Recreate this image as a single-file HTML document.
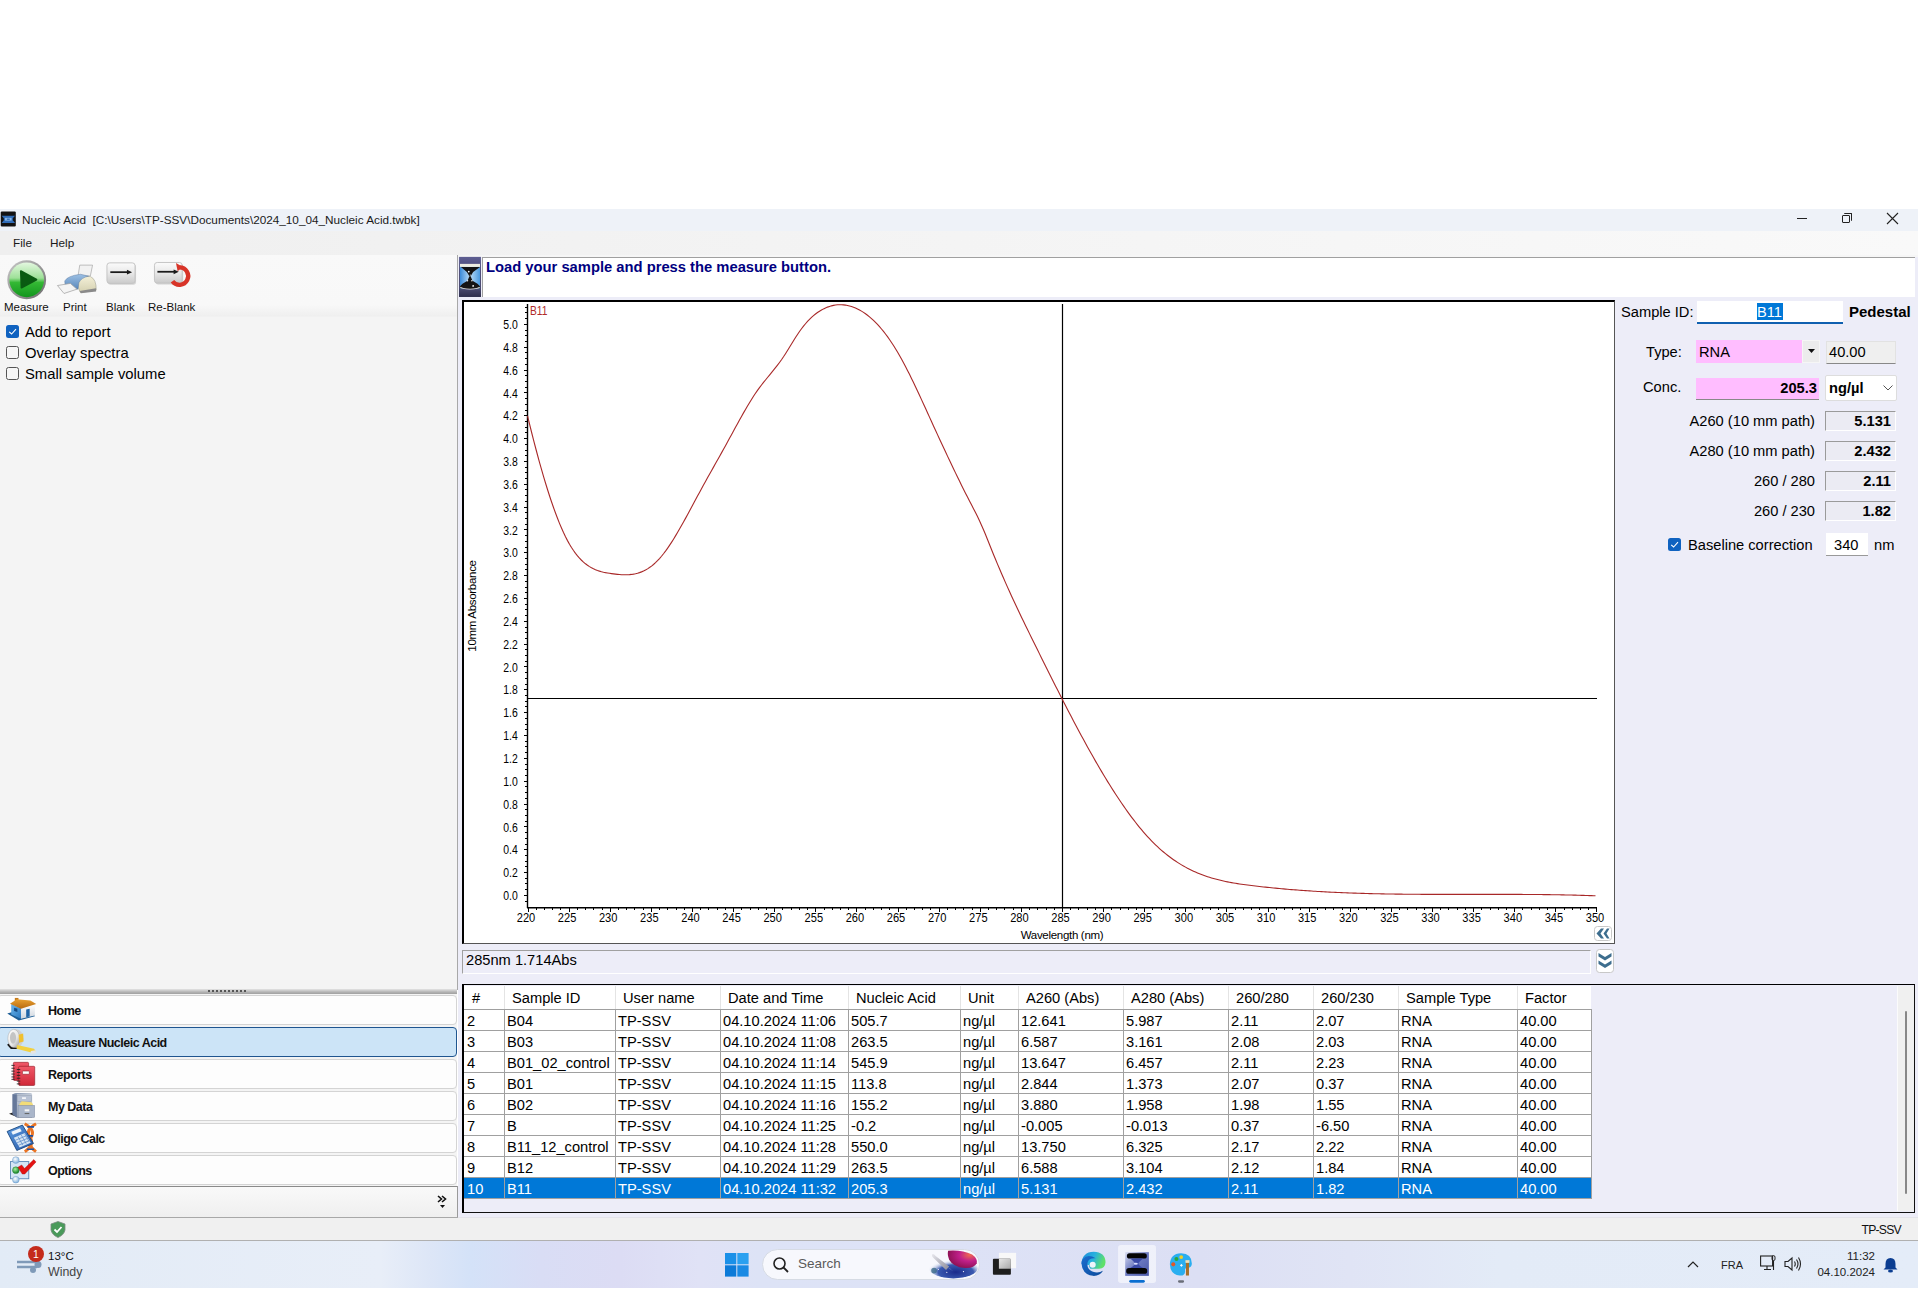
<!DOCTYPE html>
<html><head><meta charset="utf-8">
<style>
*{margin:0;padding:0;box-sizing:border-box}
html,body{width:1920px;height:1312px;overflow:hidden;background:#fff;font-family:"Liberation Sans", sans-serif;color:#000}
.a{position:absolute}
.t{position:absolute;white-space:nowrap;line-height:1}
svg text{font-family:"Liberation Sans", sans-serif}
.ax{font-size:12.6px;fill:#000}
.ax2{font-size:11.5px;letter-spacing:-0.3px;fill:#000}
</style></head><body>

<div class="a" style="left:0;top:209px;width:1918px;height:22px;background:#eef2f8"></div>
<div class="a" style="left:0;top:231px;width:1918px;height:24px;background:linear-gradient(90deg,#efefef,#f3f3f3 40%,#f9f9f9)"></div>
<div class="t" style="left:22px;top:214px;font-size:11.75px;color:#1a1a1a">Nucleic Acid&nbsp; [C:\Users\TP-SSV\Documents\2024_10_04_Nucleic Acid.twbk]</div>
<div class="t" style="left:13px;top:237px;font-size:11.75px;color:#1a1a1a">File</div>
<div class="t" style="left:50px;top:237px;font-size:11.75px;color:#1a1a1a">Help</div>
<svg class="a" style="left:0;top:200px" width="20" height="40" viewBox="0 0 219 437">
<rect x="8" y="125" width="165" height="165" rx="12" fill="#121212"/>
<path d="M18,172 L165,172 L140,200 L140,222 L165,250 L18,250 L42,222 L42,200 Z" fill="#2f6cb8"/>
<rect x="55" y="195" width="72" height="30" fill="#8ab8e8"/>
<rect x="75" y="203" width="32" height="14" fill="#2f6cb8"/>
</svg>
<div class="a" style="left:1797px;top:218px;width:10px;height:1px;background:#222"></div>
<div class="a" style="left:1842px;top:215px;width:8px;height:8px;border:1px solid #222;border-radius:1px"></div>
<div class="a" style="left:1844px;top:213px;width:8px;height:8px;border-top:1px solid #222;border-right:1px solid #222;border-radius:1px"></div>
<svg class="a" style="left:1886px;top:212px" width="13" height="13"><path d="M1,1 L12,12 M12,1 L1,12" stroke="#222" stroke-width="1.1"/></svg>
<div class="a" style="left:0;top:255px;width:457px;height:962px;background:#f4f4f4"></div>
<div class="a" style="left:0;top:255px;width:457px;height:62px;background:linear-gradient(#f9f9f9 0px,#f8f8f8 50px,#efefef 61px,#f3f3f3 62px)"></div>
<div class="a" style="left:457px;top:255px;width:1px;height:735px;background:#a8a8a8"></div>
<svg class="a" style="left:0;top:200px" width="120" height="120" viewBox="0 0 1312 1312">
<defs>
<linearGradient id="mr" x1="0" y1="0" x2="1" y2="1"><stop offset="0" stop-color="#c8c8c8"/><stop offset="1" stop-color="#6a6a6a"/></linearGradient>
<linearGradient id="mg" x1="0" y1="0" x2="0" y2="1"><stop offset="0" stop-color="#e4f8e0"/><stop offset="0.45" stop-color="#9ee098"/><stop offset="0.58" stop-color="#34b834"/><stop offset="1" stop-color="#12961e"/></linearGradient>
<linearGradient id="pb" x1="0" y1="0" x2="0" y2="1"><stop offset="0" stop-color="#9cc0e4"/><stop offset="1" stop-color="#5a88bc"/></linearGradient>
<linearGradient id="pc" x1="0" y1="0" x2="0" y2="1"><stop offset="0" stop-color="#f4f0d8"/><stop offset="1" stop-color="#d4d0b0"/></linearGradient>
</defs>
<circle cx="292" cy="872" r="212" fill="url(#mr)"/>
<circle cx="292" cy="872" r="190" fill="url(#mg)"/>
<path d="M228,778 L398,870 L235,958 Z" fill="#0a5a12" stroke="#0a5a12" stroke-width="20" stroke-linejoin="round"/>
<path d="M872,712 L1012,712 L988,830 L852,838 Z" fill="#f2f2f2" stroke="#a8a8a8" stroke-width="8"/>
<path d="M840,830 L990,838 Q1055,868 1052,985 L880,1012 Q845,960 840,830 Z" fill="url(#pc)" stroke="#9a9a8a" stroke-width="6"/>
<path d="M708,885 Q740,828 880,812 L968,832 Q885,852 862,905 L852,975 Q760,962 712,935 Z" fill="url(#pb)" stroke="#5a7aa0" stroke-width="5"/>
<path d="M628,935 L770,912 L842,975 L700,1022 Z" fill="#f4f4f4" stroke="#a0a0a0" stroke-width="8"/>
<path d="M870,995 L1050,965 L1050,1000 L885,1020 Z" fill="#8a8a8a"/>
</svg>
<svg class="a" style="left:100px;top:250px" width="380" height="150" viewBox="0 0 1920 758">
<defs><linearGradient id="bk" x1="0" y1="0" x2="0" y2="1"><stop offset="0" stop-color="#fbfbfb"/><stop offset="0.5" stop-color="#e8e8e8"/><stop offset="1" stop-color="#cacaca"/></linearGradient></defs>
<rect x="40" y="72" width="142" height="104" rx="14" fill="#bdbdbd" opacity="0.6"/>
<rect x="35" y="65" width="142" height="104" rx="14" fill="url(#bk)" stroke="#c4c4c4" stroke-width="5"/>
<path d="M52,112 L142,112" stroke="#1a1a1a" stroke-width="9"/><path d="M136,100 L162,112 L136,124 Z" fill="#1a1a1a"/>
<rect x="280" y="70" width="140" height="104" rx="14" fill="#bdbdbd" opacity="0.6"/>
<rect x="275" y="63" width="140" height="104" rx="14" fill="url(#bk)" stroke="#c4c4c4" stroke-width="5"/>
<path d="M290,110 L378,110" stroke="#1a1a1a" stroke-width="9"/><path d="M372,98 L398,110 L372,122 Z" fill="#1a1a1a"/>
<path d="M402,88 A44,44 0 1 1 366,158" fill="none" stroke="#d83428" stroke-width="22"/>
<path d="M384,66 L418,86 L392,108 Z" fill="#d83428"/>
</svg>
<div class="t" style="left:4px;top:302px;font-size:11.5px;color:#111">Measure</div>
<div class="t" style="left:63px;top:302px;font-size:11.5px;color:#111">Print</div>
<div class="t" style="left:106px;top:302px;font-size:11.5px;color:#111">Blank</div>
<div class="t" style="left:148px;top:302px;font-size:11.5px;color:#111">Re-Blank</div>
<div class="a" style="left:6px;top:325px;width:13px;height:13px;background:#0f62c0;border-radius:2.5px"></div>
<svg class="a" style="left:6px;top:325px" width="13" height="13"><path d="M3.2,6.8 L5.6,9 L10,4.2" fill="none" stroke="#fff" stroke-width="1.1"/></svg>
<div class="a" style="left:6px;top:346px;width:13px;height:13px;border:1px solid #555;border-radius:2.5px;background:#f6f6f6"></div>
<div class="a" style="left:6px;top:367px;width:13px;height:13px;border:1px solid #555;border-radius:2.5px;background:#f6f6f6"></div>
<div class="t" style="left:25px;top:325px;font-size:14.8px">Add to report</div>
<div class="t" style="left:25px;top:346px;font-size:14.8px">Overlay spectra</div>
<div class="t" style="left:25px;top:367px;font-size:14.8px">Small sample volume</div>
<div class="a" style="left:0;top:989px;width:457px;height:5px;background:linear-gradient(#e4e4e4,#b4b4b4 60%,#a0a0a0)"></div>
<div class="a" style="left:208px;top:990px;width:40px;height:2px;background:repeating-linear-gradient(90deg,#555 0 2px,transparent 2px 4px)"></div>
<div class="a" style="left:-3px;top:995px;width:460px;height:30px;background:#fdfdfd;border:1px solid #d4d4d4;border-radius:4px"></div>
<div class="t" style="left:48px;top:1005px;font-size:12.5px;font-weight:bold;letter-spacing:-0.5px;color:#111">Home</div>
<div class="a" style="left:-3px;top:1027px;width:460px;height:30px;background:#cce4f7;border:1px solid #1f5590;border-radius:4px"></div>
<div class="t" style="left:48px;top:1037px;font-size:12.5px;font-weight:bold;letter-spacing:-0.5px;color:#111">Measure Nucleic Acid</div>
<div class="a" style="left:-3px;top:1059px;width:460px;height:30px;background:#fdfdfd;border:1px solid #d4d4d4;border-radius:4px"></div>
<div class="t" style="left:48px;top:1069px;font-size:12.5px;font-weight:bold;letter-spacing:-0.5px;color:#111">Reports</div>
<div class="a" style="left:-3px;top:1091px;width:460px;height:30px;background:#fdfdfd;border:1px solid #d4d4d4;border-radius:4px"></div>
<div class="t" style="left:48px;top:1101px;font-size:12.5px;font-weight:bold;letter-spacing:-0.5px;color:#111">My Data</div>
<div class="a" style="left:-3px;top:1123px;width:460px;height:30px;background:#fdfdfd;border:1px solid #d4d4d4;border-radius:4px"></div>
<div class="t" style="left:48px;top:1133px;font-size:12.5px;font-weight:bold;letter-spacing:-0.5px;color:#111">Oligo Calc</div>
<div class="a" style="left:-3px;top:1155px;width:460px;height:30px;background:#fdfdfd;border:1px solid #d4d4d4;border-radius:4px"></div>
<div class="t" style="left:48px;top:1165px;font-size:12.5px;font-weight:bold;letter-spacing:-0.5px;color:#111">Options</div>
<svg class="a" style="left:0;top:995px" width="50" height="95" viewBox="0 0 691 1312">
<defs>
<linearGradient id="hw" x1="0" y1="0" x2="0" y2="1"><stop offset="0" stop-color="#ffffff"/><stop offset="1" stop-color="#cfd6de"/></linearGradient>
<linearGradient id="hl" x1="0" y1="0" x2="1" y2="1"><stop offset="0" stop-color="#6ab4ea"/><stop offset="1" stop-color="#2a78c0"/></linearGradient>
<linearGradient id="hr" x1="0" y1="0" x2="0" y2="1"><stop offset="0" stop-color="#e8a030"/><stop offset="1" stop-color="#b86a10"/></linearGradient>
<linearGradient id="tp" x1="0" y1="0" x2="1" y2="1"><stop offset="0" stop-color="#ffffff"/><stop offset="0.6" stop-color="#e6e6e6"/><stop offset="1" stop-color="#9a9a9a"/></linearGradient>
<linearGradient id="rb" x1="0" y1="0" x2="0" y2="1"><stop offset="0" stop-color="#f05868"/><stop offset="1" stop-color="#d02838"/></linearGradient>
</defs>
<path d="M100,255 L260,352 L482,292 L470,270 L290,322 L160,238 Z" fill="#1d5e96"/>
<path d="M155,125 L290,182 L290,327 L155,268 Z" fill="url(#hl)"/>
<path d="M290,182 L482,128 L482,282 L290,327 Z" fill="url(#hw)"/>
<path d="M362,200 L410,188 L410,296 L362,307 Z" fill="#1f64a6"/>
<path d="M195,175 L240,190 L240,235 L195,220 Z" fill="#174a80"/>
<rect x="205" y="40" width="50" height="50" fill="#c47a1c"/>
<path d="M138,120 L232,58 L420,75 L500,125 L290,188 Z" fill="url(#hr)"/>
<path d="M98,688 L150,745 L255,745 L262,700 L150,650 Z" fill="#161616"/>
<ellipse cx="225" cy="600" rx="98" ry="128" fill="#cfcfcf"/>
<ellipse cx="190" cy="600" rx="82" ry="126" fill="url(#tp)" stroke="#a0a0a0" stroke-width="6"/>
<ellipse cx="180" cy="592" rx="42" ry="80" fill="#c4c4c4"/>
<path d="M258,548 L320,530 L326,642 L264,658 Z" fill="#f0c030"/>
<path d="M238,690 L470,742 L494,778 L462,802 L228,742 Z" fill="#f2d040"/>
<path d="M425,772 L492,762 L498,800 L432,818 Z" fill="#e4e4e4"/>
<rect x="185" y="930" width="210" height="250" rx="14" fill="url(#rb)" stroke="#8a1420" stroke-width="8"/>
<rect x="258" y="985" width="222" height="265" rx="14" fill="url(#rb)" stroke="#8a1420" stroke-width="8"/>
<rect x="310" y="1050" width="95" height="45" rx="8" fill="#fff" stroke="#8a1420" stroke-width="8"/>
<path d="M158,972 h45 M158,1012 h45 M158,1052 h45 M158,1092 h45 M158,1132 h45 M158,1165 h45" stroke="#222" stroke-width="12"/>
<path d="M232,1030 h48 M232,1070 h48 M232,1110 h48 M232,1150 h48 M232,1190 h48 M232,1228 h48" stroke="#222" stroke-width="12"/>
</svg>
<svg class="a" style="left:0;top:1088px" width="50" height="98" viewBox="0 0 669 1312">
<defs>
<linearGradient id="cf" x1="0" y1="0" x2="0" y2="1"><stop offset="0" stop-color="#c4ccda"/><stop offset="1" stop-color="#98a4b8"/></linearGradient>
<linearGradient id="ca" x1="0" y1="0" x2="1" y2="1"><stop offset="0" stop-color="#5a9ae0"/><stop offset="1" stop-color="#2a5aa8"/></linearGradient>
<radialGradient id="gb" cx="40%" cy="35%" r="60%"><stop offset="0" stop-color="#a8f0a0"/><stop offset="1" stop-color="#1a8a2a"/></radialGradient>
<radialGradient id="bb" cx="40%" cy="35%" r="60%"><stop offset="0" stop-color="#ffffff"/><stop offset="1" stop-color="#8ab8e0"/></radialGradient>
</defs>
<path d="M120,345 L250,398 L250,372 L170,328 Z" fill="#222"/>
<path d="M165,82 L228,66 L228,398 L165,350 Z" fill="#66789a"/>
<path d="M165,82 L222,66 L420,72 L430,88 L228,92 Z" fill="#8a9ab4"/>
<rect x="226" y="90" width="204" height="308" fill="url(#cf)"/>
<rect x="232" y="98" width="188" height="80" fill="#b8c2d4" stroke="#8a96aa" stroke-width="5"/>
<rect x="295" y="125" width="52" height="20" fill="#fff"/>
<path d="M258,218 L290,178 L420,190 L442,216 L432,242 L258,246 Z" fill="#f2dc78"/>
<rect x="242" y="232" width="222" height="162" fill="#aab6ca" stroke="#7a869c" stroke-width="6"/>
<rect x="330" y="285" width="62" height="28" fill="#f4f4f4"/>
<rect x="330" y="335" width="62" height="14" fill="#666"/>
<path d="M330,478 Q480,560 415,662 Q352,762 482,852" fill="none" stroke="#ea7424" stroke-width="40"/>
<path d="M482,478 Q332,560 400,662 Q468,762 332,852" fill="none" stroke="#ea7424" stroke-width="40"/>
<path d="M365,520 h90 M372,640 h70 M360,820 h95" stroke="#2050a0" stroke-width="22"/>
<path d="M95,582 L300,496 L448,742 L225,836 Z" fill="url(#ca)" stroke="#1a4880" stroke-width="12"/>
<path d="M150,585 L268,538 L290,578 L172,625 Z" fill="#eef4fb"/>
<path d="M185,665 L332,602 L412,732 L262,795 Z" fill="#d4e4f4"/>
<path d="M205,700 L350,640 M225,735 L372,672 M245,768 L392,705 M240,650 L305,765 M285,630 L350,745 M330,612 L390,720" stroke="#5a8ac8" stroke-width="10"/>
<rect x="140" y="985" width="245" height="230" fill="#d6e6f6" stroke="#5a86b4" stroke-width="12"/>
<circle cx="212" cy="965" r="45" fill="url(#bb)" stroke="#6a96c4" stroke-width="6"/>
<circle cx="212" cy="1100" r="45" fill="url(#gb)" stroke="#2a7a3a" stroke-width="6"/>
<circle cx="212" cy="1228" r="45" fill="url(#bb)" stroke="#6a96c4" stroke-width="6"/>
<path d="M240,1062 L290,1030 L328,1078 L452,958 L482,990 L332,1152 L298,1152 Z" fill="#e41212" stroke="#a00808" stroke-width="5"/>
</svg>
<div class="a" style="left:0;top:1186px;width:457px;height:1px;background:#8a8a8a"></div>
<div class="a" style="left:0;top:1187px;width:457px;height:30px;background:linear-gradient(#f9f9f9,#efefef)"></div>
<svg class="a" style="left:437px;top:1195px" width="11" height="14"><path d="M1,1 L4.5,4 L1,7 M5,1 L8.5,4 L5,7" fill="none" stroke="#111" stroke-width="1.6"/><path d="M3,10 L8,10 L5.5,13 Z" fill="#111"/></svg>
<div class="a" style="left:457px;top:1186px;width:1px;height:32px;background:#9a9a9a"></div>
<div class="a" style="left:0;top:1217px;width:458px;height:1px;background:#a8a8a8"></div>
<div class="a" style="left:458px;top:1217px;width:1460px;height:1px;background:#e4e4ea"></div>
<div class="a" style="left:458px;top:255px;width:1460px;height:962px;background:#ededf8"></div>
<div class="a" style="left:458px;top:255px;width:1460px;height:2px;background:#f6f6f6"></div>
<svg class="a" style="left:440px;top:240px" width="120" height="80" viewBox="0 0 1920 1280">
<defs>
<linearGradient id="hgt" x1="0" y1="0" x2="0" y2="1"><stop offset="0" stop-color="#5e5e92"/><stop offset="0.3" stop-color="#4a4a78"/><stop offset="1" stop-color="#3a3a60"/></linearGradient>
<linearGradient id="hgb" x1="0" y1="0" x2="0" y2="1"><stop offset="0" stop-color="#4a4a70"/><stop offset="1" stop-color="#2e2e4c"/></linearGradient>
<linearGradient id="hgs" x1="0" y1="0" x2="1" y2="0"><stop offset="0" stop-color="#3a8ad8"/><stop offset="0.5" stop-color="#b8dcf8"/><stop offset="1" stop-color="#4a9ae0"/></linearGradient>
</defs>
<rect x="305" y="270" width="350" height="640" fill="url(#hgt)"/>
<rect x="305" y="770" width="350" height="140" fill="url(#hgb)"/>
<rect x="320" y="385" width="320" height="400" fill="url(#hgs)"/>
<rect x="320" y="382" width="320" height="48" fill="#ecece0"/>
<path d="M335,430 L640,430 L530,510 L490,580 L470,580 L430,510 Z" fill="#121212"/>
<path d="M470,580 L490,580 L520,650 L600,700 L640,740 L640,775 L320,775 L320,740 L360,700 L440,650 Z" fill="#141414"/>
<ellipse cx="480" cy="760" rx="160" ry="30" fill="#e0e0e0"/>
<ellipse cx="480" cy="740" rx="150" ry="40" fill="#161616"/>
<circle cx="460" cy="505" r="14" fill="#fff"/><circle cx="485" cy="560" r="10" fill="#ddd"/><circle cx="440" cy="650" r="12" fill="#eee"/><circle cx="510" cy="650" r="12" fill="#eee"/><circle cx="530" cy="735" r="14" fill="#fff"/>
</svg>
<div class="a" style="left:482px;top:257px;width:1433px;height:40px;background:#fff;border-top:1px solid #a0a0a0;border-left:1px solid #a0a0a0"></div>
<div class="t" style="left:486px;top:260px;font-size:14.75px;font-weight:bold;color:#000080">Load your sample and press the measure button.</div>
<div class="a" style="left:462px;top:300px;width:1153px;height:644px;background:#fff;border-top:2px solid #000;border-left:2px solid #000;border-right:1px solid #555;border-bottom:1px solid #555"></div>
<svg class="a" style="left:0;top:0" width="1920" height="1312"><rect x="526.8" y="304" width="1.4" height="604" fill="#000"/>
<rect x="527" y="907" width="1070" height="1.5" fill="#000"/>
<line x1="525.0" y1="901.5" x2="527" y2="901.5" stroke="#000" stroke-width="1" shape-rendering="crispEdges"/>
<line x1="523.5" y1="895.5" x2="527" y2="895.5" stroke="#000" stroke-width="1" shape-rendering="crispEdges"/>
<text x="517.8" y="900.0" text-anchor="end" class="ax" textLength="14.5" lengthAdjust="spacingAndGlyphs">0.0</text>
<line x1="525.0" y1="889.5" x2="527" y2="889.5" stroke="#000" stroke-width="1" shape-rendering="crispEdges"/>
<line x1="525.0" y1="883.5" x2="527" y2="883.5" stroke="#000" stroke-width="1" shape-rendering="crispEdges"/>
<line x1="525.0" y1="878.5" x2="527" y2="878.5" stroke="#000" stroke-width="1" shape-rendering="crispEdges"/>
<line x1="523.5" y1="872.5" x2="527" y2="872.5" stroke="#000" stroke-width="1" shape-rendering="crispEdges"/>
<text x="517.8" y="877.2" text-anchor="end" class="ax" textLength="14.5" lengthAdjust="spacingAndGlyphs">0.2</text>
<line x1="525.0" y1="866.5" x2="527" y2="866.5" stroke="#000" stroke-width="1" shape-rendering="crispEdges"/>
<line x1="525.0" y1="861.5" x2="527" y2="861.5" stroke="#000" stroke-width="1" shape-rendering="crispEdges"/>
<line x1="525.0" y1="855.5" x2="527" y2="855.5" stroke="#000" stroke-width="1" shape-rendering="crispEdges"/>
<line x1="523.5" y1="849.5" x2="527" y2="849.5" stroke="#000" stroke-width="1" shape-rendering="crispEdges"/>
<text x="517.8" y="854.3" text-anchor="end" class="ax" textLength="14.5" lengthAdjust="spacingAndGlyphs">0.4</text>
<line x1="525.0" y1="844.5" x2="527" y2="844.5" stroke="#000" stroke-width="1" shape-rendering="crispEdges"/>
<line x1="525.0" y1="838.5" x2="527" y2="838.5" stroke="#000" stroke-width="1" shape-rendering="crispEdges"/>
<line x1="525.0" y1="832.5" x2="527" y2="832.5" stroke="#000" stroke-width="1" shape-rendering="crispEdges"/>
<line x1="523.5" y1="826.5" x2="527" y2="826.5" stroke="#000" stroke-width="1" shape-rendering="crispEdges"/>
<text x="517.8" y="831.5" text-anchor="end" class="ax" textLength="14.5" lengthAdjust="spacingAndGlyphs">0.6</text>
<line x1="525.0" y1="821.5" x2="527" y2="821.5" stroke="#000" stroke-width="1" shape-rendering="crispEdges"/>
<line x1="525.0" y1="815.5" x2="527" y2="815.5" stroke="#000" stroke-width="1" shape-rendering="crispEdges"/>
<line x1="525.0" y1="809.5" x2="527" y2="809.5" stroke="#000" stroke-width="1" shape-rendering="crispEdges"/>
<line x1="523.5" y1="804.5" x2="527" y2="804.5" stroke="#000" stroke-width="1" shape-rendering="crispEdges"/>
<text x="517.8" y="808.6" text-anchor="end" class="ax" textLength="14.5" lengthAdjust="spacingAndGlyphs">0.8</text>
<line x1="525.0" y1="798.5" x2="527" y2="798.5" stroke="#000" stroke-width="1" shape-rendering="crispEdges"/>
<line x1="525.0" y1="792.5" x2="527" y2="792.5" stroke="#000" stroke-width="1" shape-rendering="crispEdges"/>
<line x1="525.0" y1="786.5" x2="527" y2="786.5" stroke="#000" stroke-width="1" shape-rendering="crispEdges"/>
<line x1="523.5" y1="781.5" x2="527" y2="781.5" stroke="#000" stroke-width="1" shape-rendering="crispEdges"/>
<text x="517.8" y="785.8" text-anchor="end" class="ax" textLength="14.5" lengthAdjust="spacingAndGlyphs">1.0</text>
<line x1="525.0" y1="775.5" x2="527" y2="775.5" stroke="#000" stroke-width="1" shape-rendering="crispEdges"/>
<line x1="525.0" y1="769.5" x2="527" y2="769.5" stroke="#000" stroke-width="1" shape-rendering="crispEdges"/>
<line x1="525.0" y1="764.5" x2="527" y2="764.5" stroke="#000" stroke-width="1" shape-rendering="crispEdges"/>
<line x1="523.5" y1="758.5" x2="527" y2="758.5" stroke="#000" stroke-width="1" shape-rendering="crispEdges"/>
<text x="517.8" y="763.0" text-anchor="end" class="ax" textLength="14.5" lengthAdjust="spacingAndGlyphs">1.2</text>
<line x1="525.0" y1="752.5" x2="527" y2="752.5" stroke="#000" stroke-width="1" shape-rendering="crispEdges"/>
<line x1="525.0" y1="746.5" x2="527" y2="746.5" stroke="#000" stroke-width="1" shape-rendering="crispEdges"/>
<line x1="525.0" y1="741.5" x2="527" y2="741.5" stroke="#000" stroke-width="1" shape-rendering="crispEdges"/>
<line x1="523.5" y1="735.5" x2="527" y2="735.5" stroke="#000" stroke-width="1" shape-rendering="crispEdges"/>
<text x="517.8" y="740.1" text-anchor="end" class="ax" textLength="14.5" lengthAdjust="spacingAndGlyphs">1.4</text>
<line x1="525.0" y1="729.5" x2="527" y2="729.5" stroke="#000" stroke-width="1" shape-rendering="crispEdges"/>
<line x1="525.0" y1="724.5" x2="527" y2="724.5" stroke="#000" stroke-width="1" shape-rendering="crispEdges"/>
<line x1="525.0" y1="718.5" x2="527" y2="718.5" stroke="#000" stroke-width="1" shape-rendering="crispEdges"/>
<line x1="523.5" y1="712.5" x2="527" y2="712.5" stroke="#000" stroke-width="1" shape-rendering="crispEdges"/>
<text x="517.8" y="717.3" text-anchor="end" class="ax" textLength="14.5" lengthAdjust="spacingAndGlyphs">1.6</text>
<line x1="525.0" y1="706.5" x2="527" y2="706.5" stroke="#000" stroke-width="1" shape-rendering="crispEdges"/>
<line x1="525.0" y1="701.5" x2="527" y2="701.5" stroke="#000" stroke-width="1" shape-rendering="crispEdges"/>
<line x1="525.0" y1="695.5" x2="527" y2="695.5" stroke="#000" stroke-width="1" shape-rendering="crispEdges"/>
<line x1="523.5" y1="689.5" x2="527" y2="689.5" stroke="#000" stroke-width="1" shape-rendering="crispEdges"/>
<text x="517.8" y="694.4" text-anchor="end" class="ax" textLength="14.5" lengthAdjust="spacingAndGlyphs">1.8</text>
<line x1="525.0" y1="684.5" x2="527" y2="684.5" stroke="#000" stroke-width="1" shape-rendering="crispEdges"/>
<line x1="525.0" y1="678.5" x2="527" y2="678.5" stroke="#000" stroke-width="1" shape-rendering="crispEdges"/>
<line x1="525.0" y1="672.5" x2="527" y2="672.5" stroke="#000" stroke-width="1" shape-rendering="crispEdges"/>
<line x1="523.5" y1="666.5" x2="527" y2="666.5" stroke="#000" stroke-width="1" shape-rendering="crispEdges"/>
<text x="517.8" y="671.6" text-anchor="end" class="ax" textLength="14.5" lengthAdjust="spacingAndGlyphs">2.0</text>
<line x1="525.0" y1="661.5" x2="527" y2="661.5" stroke="#000" stroke-width="1" shape-rendering="crispEdges"/>
<line x1="525.0" y1="655.5" x2="527" y2="655.5" stroke="#000" stroke-width="1" shape-rendering="crispEdges"/>
<line x1="525.0" y1="649.5" x2="527" y2="649.5" stroke="#000" stroke-width="1" shape-rendering="crispEdges"/>
<line x1="523.5" y1="644.5" x2="527" y2="644.5" stroke="#000" stroke-width="1" shape-rendering="crispEdges"/>
<text x="517.8" y="648.8" text-anchor="end" class="ax" textLength="14.5" lengthAdjust="spacingAndGlyphs">2.2</text>
<line x1="525.0" y1="638.5" x2="527" y2="638.5" stroke="#000" stroke-width="1" shape-rendering="crispEdges"/>
<line x1="525.0" y1="632.5" x2="527" y2="632.5" stroke="#000" stroke-width="1" shape-rendering="crispEdges"/>
<line x1="525.0" y1="627.5" x2="527" y2="627.5" stroke="#000" stroke-width="1" shape-rendering="crispEdges"/>
<line x1="523.5" y1="621.5" x2="527" y2="621.5" stroke="#000" stroke-width="1" shape-rendering="crispEdges"/>
<text x="517.8" y="625.9" text-anchor="end" class="ax" textLength="14.5" lengthAdjust="spacingAndGlyphs">2.4</text>
<line x1="525.0" y1="615.5" x2="527" y2="615.5" stroke="#000" stroke-width="1" shape-rendering="crispEdges"/>
<line x1="525.0" y1="609.5" x2="527" y2="609.5" stroke="#000" stroke-width="1" shape-rendering="crispEdges"/>
<line x1="525.0" y1="604.5" x2="527" y2="604.5" stroke="#000" stroke-width="1" shape-rendering="crispEdges"/>
<line x1="523.5" y1="598.5" x2="527" y2="598.5" stroke="#000" stroke-width="1" shape-rendering="crispEdges"/>
<text x="517.8" y="603.1" text-anchor="end" class="ax" textLength="14.5" lengthAdjust="spacingAndGlyphs">2.6</text>
<line x1="525.0" y1="592.5" x2="527" y2="592.5" stroke="#000" stroke-width="1" shape-rendering="crispEdges"/>
<line x1="525.0" y1="587.5" x2="527" y2="587.5" stroke="#000" stroke-width="1" shape-rendering="crispEdges"/>
<line x1="525.0" y1="581.5" x2="527" y2="581.5" stroke="#000" stroke-width="1" shape-rendering="crispEdges"/>
<line x1="523.5" y1="575.5" x2="527" y2="575.5" stroke="#000" stroke-width="1" shape-rendering="crispEdges"/>
<text x="517.8" y="580.2" text-anchor="end" class="ax" textLength="14.5" lengthAdjust="spacingAndGlyphs">2.8</text>
<line x1="525.0" y1="569.5" x2="527" y2="569.5" stroke="#000" stroke-width="1" shape-rendering="crispEdges"/>
<line x1="525.0" y1="564.5" x2="527" y2="564.5" stroke="#000" stroke-width="1" shape-rendering="crispEdges"/>
<line x1="525.0" y1="558.5" x2="527" y2="558.5" stroke="#000" stroke-width="1" shape-rendering="crispEdges"/>
<line x1="523.5" y1="552.5" x2="527" y2="552.5" stroke="#000" stroke-width="1" shape-rendering="crispEdges"/>
<text x="517.8" y="557.4" text-anchor="end" class="ax" textLength="14.5" lengthAdjust="spacingAndGlyphs">3.0</text>
<line x1="525.0" y1="547.5" x2="527" y2="547.5" stroke="#000" stroke-width="1" shape-rendering="crispEdges"/>
<line x1="525.0" y1="541.5" x2="527" y2="541.5" stroke="#000" stroke-width="1" shape-rendering="crispEdges"/>
<line x1="525.0" y1="535.5" x2="527" y2="535.5" stroke="#000" stroke-width="1" shape-rendering="crispEdges"/>
<line x1="523.5" y1="529.5" x2="527" y2="529.5" stroke="#000" stroke-width="1" shape-rendering="crispEdges"/>
<text x="517.8" y="534.6" text-anchor="end" class="ax" textLength="14.5" lengthAdjust="spacingAndGlyphs">3.2</text>
<line x1="525.0" y1="524.5" x2="527" y2="524.5" stroke="#000" stroke-width="1" shape-rendering="crispEdges"/>
<line x1="525.0" y1="518.5" x2="527" y2="518.5" stroke="#000" stroke-width="1" shape-rendering="crispEdges"/>
<line x1="525.0" y1="512.5" x2="527" y2="512.5" stroke="#000" stroke-width="1" shape-rendering="crispEdges"/>
<line x1="523.5" y1="507.5" x2="527" y2="507.5" stroke="#000" stroke-width="1" shape-rendering="crispEdges"/>
<text x="517.8" y="511.7" text-anchor="end" class="ax" textLength="14.5" lengthAdjust="spacingAndGlyphs">3.4</text>
<line x1="525.0" y1="501.5" x2="527" y2="501.5" stroke="#000" stroke-width="1" shape-rendering="crispEdges"/>
<line x1="525.0" y1="495.5" x2="527" y2="495.5" stroke="#000" stroke-width="1" shape-rendering="crispEdges"/>
<line x1="525.0" y1="489.5" x2="527" y2="489.5" stroke="#000" stroke-width="1" shape-rendering="crispEdges"/>
<line x1="523.5" y1="484.5" x2="527" y2="484.5" stroke="#000" stroke-width="1" shape-rendering="crispEdges"/>
<text x="517.8" y="488.9" text-anchor="end" class="ax" textLength="14.5" lengthAdjust="spacingAndGlyphs">3.6</text>
<line x1="525.0" y1="478.5" x2="527" y2="478.5" stroke="#000" stroke-width="1" shape-rendering="crispEdges"/>
<line x1="525.0" y1="472.5" x2="527" y2="472.5" stroke="#000" stroke-width="1" shape-rendering="crispEdges"/>
<line x1="525.0" y1="467.5" x2="527" y2="467.5" stroke="#000" stroke-width="1" shape-rendering="crispEdges"/>
<line x1="523.5" y1="461.5" x2="527" y2="461.5" stroke="#000" stroke-width="1" shape-rendering="crispEdges"/>
<text x="517.8" y="466.0" text-anchor="end" class="ax" textLength="14.5" lengthAdjust="spacingAndGlyphs">3.8</text>
<line x1="525.0" y1="455.5" x2="527" y2="455.5" stroke="#000" stroke-width="1" shape-rendering="crispEdges"/>
<line x1="525.0" y1="450.5" x2="527" y2="450.5" stroke="#000" stroke-width="1" shape-rendering="crispEdges"/>
<line x1="525.0" y1="444.5" x2="527" y2="444.5" stroke="#000" stroke-width="1" shape-rendering="crispEdges"/>
<line x1="523.5" y1="438.5" x2="527" y2="438.5" stroke="#000" stroke-width="1" shape-rendering="crispEdges"/>
<text x="517.8" y="443.2" text-anchor="end" class="ax" textLength="14.5" lengthAdjust="spacingAndGlyphs">4.0</text>
<line x1="525.0" y1="432.5" x2="527" y2="432.5" stroke="#000" stroke-width="1" shape-rendering="crispEdges"/>
<line x1="525.0" y1="427.5" x2="527" y2="427.5" stroke="#000" stroke-width="1" shape-rendering="crispEdges"/>
<line x1="525.0" y1="421.5" x2="527" y2="421.5" stroke="#000" stroke-width="1" shape-rendering="crispEdges"/>
<line x1="523.5" y1="415.5" x2="527" y2="415.5" stroke="#000" stroke-width="1" shape-rendering="crispEdges"/>
<text x="517.8" y="420.4" text-anchor="end" class="ax" textLength="14.5" lengthAdjust="spacingAndGlyphs">4.2</text>
<line x1="525.0" y1="410.5" x2="527" y2="410.5" stroke="#000" stroke-width="1" shape-rendering="crispEdges"/>
<line x1="525.0" y1="404.5" x2="527" y2="404.5" stroke="#000" stroke-width="1" shape-rendering="crispEdges"/>
<line x1="525.0" y1="398.5" x2="527" y2="398.5" stroke="#000" stroke-width="1" shape-rendering="crispEdges"/>
<line x1="523.5" y1="392.5" x2="527" y2="392.5" stroke="#000" stroke-width="1" shape-rendering="crispEdges"/>
<text x="517.8" y="397.5" text-anchor="end" class="ax" textLength="14.5" lengthAdjust="spacingAndGlyphs">4.4</text>
<line x1="525.0" y1="387.5" x2="527" y2="387.5" stroke="#000" stroke-width="1" shape-rendering="crispEdges"/>
<line x1="525.0" y1="381.5" x2="527" y2="381.5" stroke="#000" stroke-width="1" shape-rendering="crispEdges"/>
<line x1="525.0" y1="375.5" x2="527" y2="375.5" stroke="#000" stroke-width="1" shape-rendering="crispEdges"/>
<line x1="523.5" y1="370.5" x2="527" y2="370.5" stroke="#000" stroke-width="1" shape-rendering="crispEdges"/>
<text x="517.8" y="374.7" text-anchor="end" class="ax" textLength="14.5" lengthAdjust="spacingAndGlyphs">4.6</text>
<line x1="525.0" y1="364.5" x2="527" y2="364.5" stroke="#000" stroke-width="1" shape-rendering="crispEdges"/>
<line x1="525.0" y1="358.5" x2="527" y2="358.5" stroke="#000" stroke-width="1" shape-rendering="crispEdges"/>
<line x1="525.0" y1="352.5" x2="527" y2="352.5" stroke="#000" stroke-width="1" shape-rendering="crispEdges"/>
<line x1="523.5" y1="347.5" x2="527" y2="347.5" stroke="#000" stroke-width="1" shape-rendering="crispEdges"/>
<text x="517.8" y="351.8" text-anchor="end" class="ax" textLength="14.5" lengthAdjust="spacingAndGlyphs">4.8</text>
<line x1="525.0" y1="341.5" x2="527" y2="341.5" stroke="#000" stroke-width="1" shape-rendering="crispEdges"/>
<line x1="525.0" y1="335.5" x2="527" y2="335.5" stroke="#000" stroke-width="1" shape-rendering="crispEdges"/>
<line x1="525.0" y1="330.5" x2="527" y2="330.5" stroke="#000" stroke-width="1" shape-rendering="crispEdges"/>
<line x1="523.5" y1="324.5" x2="527" y2="324.5" stroke="#000" stroke-width="1" shape-rendering="crispEdges"/>
<text x="517.8" y="329.0" text-anchor="end" class="ax" textLength="14.5" lengthAdjust="spacingAndGlyphs">5.0</text>
<line x1="525.0" y1="318.5" x2="527" y2="318.5" stroke="#000" stroke-width="1" shape-rendering="crispEdges"/>
<line x1="525.0" y1="312.5" x2="527" y2="312.5" stroke="#000" stroke-width="1" shape-rendering="crispEdges"/>
<line x1="525.0" y1="307.5" x2="527" y2="307.5" stroke="#000" stroke-width="1" shape-rendering="crispEdges"/>
<line x1="528.5" y1="907" x2="528.5" y2="911.5" stroke="#000" stroke-width="1" shape-rendering="crispEdges"/>
<text x="526.0" y="922" text-anchor="middle" class="ax" textLength="18.5" lengthAdjust="spacingAndGlyphs">220</text>
<line x1="536.5" y1="907" x2="536.5" y2="910.0" stroke="#000" stroke-width="1" shape-rendering="crispEdges"/>
<line x1="544.5" y1="907" x2="544.5" y2="910.0" stroke="#000" stroke-width="1" shape-rendering="crispEdges"/>
<line x1="552.5" y1="907" x2="552.5" y2="910.0" stroke="#000" stroke-width="1" shape-rendering="crispEdges"/>
<line x1="560.5" y1="907" x2="560.5" y2="910.0" stroke="#000" stroke-width="1" shape-rendering="crispEdges"/>
<line x1="569.5" y1="907" x2="569.5" y2="911.5" stroke="#000" stroke-width="1" shape-rendering="crispEdges"/>
<text x="567.1" y="922" text-anchor="middle" class="ax" textLength="18.5" lengthAdjust="spacingAndGlyphs">225</text>
<line x1="577.5" y1="907" x2="577.5" y2="910.0" stroke="#000" stroke-width="1" shape-rendering="crispEdges"/>
<line x1="585.5" y1="907" x2="585.5" y2="910.0" stroke="#000" stroke-width="1" shape-rendering="crispEdges"/>
<line x1="593.5" y1="907" x2="593.5" y2="910.0" stroke="#000" stroke-width="1" shape-rendering="crispEdges"/>
<line x1="602.5" y1="907" x2="602.5" y2="910.0" stroke="#000" stroke-width="1" shape-rendering="crispEdges"/>
<line x1="610.5" y1="907" x2="610.5" y2="911.5" stroke="#000" stroke-width="1" shape-rendering="crispEdges"/>
<text x="608.2" y="922" text-anchor="middle" class="ax" textLength="18.5" lengthAdjust="spacingAndGlyphs">230</text>
<line x1="618.5" y1="907" x2="618.5" y2="910.0" stroke="#000" stroke-width="1" shape-rendering="crispEdges"/>
<line x1="626.5" y1="907" x2="626.5" y2="910.0" stroke="#000" stroke-width="1" shape-rendering="crispEdges"/>
<line x1="634.5" y1="907" x2="634.5" y2="910.0" stroke="#000" stroke-width="1" shape-rendering="crispEdges"/>
<line x1="643.5" y1="907" x2="643.5" y2="910.0" stroke="#000" stroke-width="1" shape-rendering="crispEdges"/>
<line x1="651.5" y1="907" x2="651.5" y2="911.5" stroke="#000" stroke-width="1" shape-rendering="crispEdges"/>
<text x="649.3" y="922" text-anchor="middle" class="ax" textLength="18.5" lengthAdjust="spacingAndGlyphs">235</text>
<line x1="659.5" y1="907" x2="659.5" y2="910.0" stroke="#000" stroke-width="1" shape-rendering="crispEdges"/>
<line x1="667.5" y1="907" x2="667.5" y2="910.0" stroke="#000" stroke-width="1" shape-rendering="crispEdges"/>
<line x1="676.5" y1="907" x2="676.5" y2="910.0" stroke="#000" stroke-width="1" shape-rendering="crispEdges"/>
<line x1="684.5" y1="907" x2="684.5" y2="910.0" stroke="#000" stroke-width="1" shape-rendering="crispEdges"/>
<line x1="692.5" y1="907" x2="692.5" y2="911.5" stroke="#000" stroke-width="1" shape-rendering="crispEdges"/>
<text x="690.5" y="922" text-anchor="middle" class="ax" textLength="18.5" lengthAdjust="spacingAndGlyphs">240</text>
<line x1="700.5" y1="907" x2="700.5" y2="910.0" stroke="#000" stroke-width="1" shape-rendering="crispEdges"/>
<line x1="708.5" y1="907" x2="708.5" y2="910.0" stroke="#000" stroke-width="1" shape-rendering="crispEdges"/>
<line x1="717.5" y1="907" x2="717.5" y2="910.0" stroke="#000" stroke-width="1" shape-rendering="crispEdges"/>
<line x1="725.5" y1="907" x2="725.5" y2="910.0" stroke="#000" stroke-width="1" shape-rendering="crispEdges"/>
<line x1="733.5" y1="907" x2="733.5" y2="911.5" stroke="#000" stroke-width="1" shape-rendering="crispEdges"/>
<text x="731.6" y="922" text-anchor="middle" class="ax" textLength="18.5" lengthAdjust="spacingAndGlyphs">245</text>
<line x1="741.5" y1="907" x2="741.5" y2="910.0" stroke="#000" stroke-width="1" shape-rendering="crispEdges"/>
<line x1="750.5" y1="907" x2="750.5" y2="910.0" stroke="#000" stroke-width="1" shape-rendering="crispEdges"/>
<line x1="758.5" y1="907" x2="758.5" y2="910.0" stroke="#000" stroke-width="1" shape-rendering="crispEdges"/>
<line x1="766.5" y1="907" x2="766.5" y2="910.0" stroke="#000" stroke-width="1" shape-rendering="crispEdges"/>
<line x1="774.5" y1="907" x2="774.5" y2="911.5" stroke="#000" stroke-width="1" shape-rendering="crispEdges"/>
<text x="772.7" y="922" text-anchor="middle" class="ax" textLength="18.5" lengthAdjust="spacingAndGlyphs">250</text>
<line x1="782.5" y1="907" x2="782.5" y2="910.0" stroke="#000" stroke-width="1" shape-rendering="crispEdges"/>
<line x1="791.5" y1="907" x2="791.5" y2="910.0" stroke="#000" stroke-width="1" shape-rendering="crispEdges"/>
<line x1="799.5" y1="907" x2="799.5" y2="910.0" stroke="#000" stroke-width="1" shape-rendering="crispEdges"/>
<line x1="807.5" y1="907" x2="807.5" y2="910.0" stroke="#000" stroke-width="1" shape-rendering="crispEdges"/>
<line x1="815.5" y1="907" x2="815.5" y2="911.5" stroke="#000" stroke-width="1" shape-rendering="crispEdges"/>
<text x="813.8" y="922" text-anchor="middle" class="ax" textLength="18.5" lengthAdjust="spacingAndGlyphs">255</text>
<line x1="824.5" y1="907" x2="824.5" y2="910.0" stroke="#000" stroke-width="1" shape-rendering="crispEdges"/>
<line x1="832.5" y1="907" x2="832.5" y2="910.0" stroke="#000" stroke-width="1" shape-rendering="crispEdges"/>
<line x1="840.5" y1="907" x2="840.5" y2="910.0" stroke="#000" stroke-width="1" shape-rendering="crispEdges"/>
<line x1="848.5" y1="907" x2="848.5" y2="910.0" stroke="#000" stroke-width="1" shape-rendering="crispEdges"/>
<line x1="856.5" y1="907" x2="856.5" y2="911.5" stroke="#000" stroke-width="1" shape-rendering="crispEdges"/>
<text x="854.9" y="922" text-anchor="middle" class="ax" textLength="18.5" lengthAdjust="spacingAndGlyphs">260</text>
<line x1="865.5" y1="907" x2="865.5" y2="910.0" stroke="#000" stroke-width="1" shape-rendering="crispEdges"/>
<line x1="873.5" y1="907" x2="873.5" y2="910.0" stroke="#000" stroke-width="1" shape-rendering="crispEdges"/>
<line x1="881.5" y1="907" x2="881.5" y2="910.0" stroke="#000" stroke-width="1" shape-rendering="crispEdges"/>
<line x1="889.5" y1="907" x2="889.5" y2="910.0" stroke="#000" stroke-width="1" shape-rendering="crispEdges"/>
<line x1="898.5" y1="907" x2="898.5" y2="911.5" stroke="#000" stroke-width="1" shape-rendering="crispEdges"/>
<text x="896.0" y="922" text-anchor="middle" class="ax" textLength="18.5" lengthAdjust="spacingAndGlyphs">265</text>
<line x1="906.5" y1="907" x2="906.5" y2="910.0" stroke="#000" stroke-width="1" shape-rendering="crispEdges"/>
<line x1="914.5" y1="907" x2="914.5" y2="910.0" stroke="#000" stroke-width="1" shape-rendering="crispEdges"/>
<line x1="922.5" y1="907" x2="922.5" y2="910.0" stroke="#000" stroke-width="1" shape-rendering="crispEdges"/>
<line x1="930.5" y1="907" x2="930.5" y2="910.0" stroke="#000" stroke-width="1" shape-rendering="crispEdges"/>
<line x1="939.5" y1="907" x2="939.5" y2="911.5" stroke="#000" stroke-width="1" shape-rendering="crispEdges"/>
<text x="937.2" y="922" text-anchor="middle" class="ax" textLength="18.5" lengthAdjust="spacingAndGlyphs">270</text>
<line x1="947.5" y1="907" x2="947.5" y2="910.0" stroke="#000" stroke-width="1" shape-rendering="crispEdges"/>
<line x1="955.5" y1="907" x2="955.5" y2="910.0" stroke="#000" stroke-width="1" shape-rendering="crispEdges"/>
<line x1="963.5" y1="907" x2="963.5" y2="910.0" stroke="#000" stroke-width="1" shape-rendering="crispEdges"/>
<line x1="972.5" y1="907" x2="972.5" y2="910.0" stroke="#000" stroke-width="1" shape-rendering="crispEdges"/>
<line x1="980.5" y1="907" x2="980.5" y2="911.5" stroke="#000" stroke-width="1" shape-rendering="crispEdges"/>
<text x="978.3" y="922" text-anchor="middle" class="ax" textLength="18.5" lengthAdjust="spacingAndGlyphs">275</text>
<line x1="988.5" y1="907" x2="988.5" y2="910.0" stroke="#000" stroke-width="1" shape-rendering="crispEdges"/>
<line x1="996.5" y1="907" x2="996.5" y2="910.0" stroke="#000" stroke-width="1" shape-rendering="crispEdges"/>
<line x1="1004.5" y1="907" x2="1004.5" y2="910.0" stroke="#000" stroke-width="1" shape-rendering="crispEdges"/>
<line x1="1013.5" y1="907" x2="1013.5" y2="910.0" stroke="#000" stroke-width="1" shape-rendering="crispEdges"/>
<line x1="1021.5" y1="907" x2="1021.5" y2="911.5" stroke="#000" stroke-width="1" shape-rendering="crispEdges"/>
<text x="1019.4" y="922" text-anchor="middle" class="ax" textLength="18.5" lengthAdjust="spacingAndGlyphs">280</text>
<line x1="1029.5" y1="907" x2="1029.5" y2="910.0" stroke="#000" stroke-width="1" shape-rendering="crispEdges"/>
<line x1="1037.5" y1="907" x2="1037.5" y2="910.0" stroke="#000" stroke-width="1" shape-rendering="crispEdges"/>
<line x1="1046.5" y1="907" x2="1046.5" y2="910.0" stroke="#000" stroke-width="1" shape-rendering="crispEdges"/>
<line x1="1054.5" y1="907" x2="1054.5" y2="910.0" stroke="#000" stroke-width="1" shape-rendering="crispEdges"/>
<line x1="1062.5" y1="907" x2="1062.5" y2="911.5" stroke="#000" stroke-width="1" shape-rendering="crispEdges"/>
<text x="1060.5" y="922" text-anchor="middle" class="ax" textLength="18.5" lengthAdjust="spacingAndGlyphs">285</text>
<line x1="1070.5" y1="907" x2="1070.5" y2="910.0" stroke="#000" stroke-width="1" shape-rendering="crispEdges"/>
<line x1="1078.5" y1="907" x2="1078.5" y2="910.0" stroke="#000" stroke-width="1" shape-rendering="crispEdges"/>
<line x1="1087.5" y1="907" x2="1087.5" y2="910.0" stroke="#000" stroke-width="1" shape-rendering="crispEdges"/>
<line x1="1095.5" y1="907" x2="1095.5" y2="910.0" stroke="#000" stroke-width="1" shape-rendering="crispEdges"/>
<line x1="1103.5" y1="907" x2="1103.5" y2="911.5" stroke="#000" stroke-width="1" shape-rendering="crispEdges"/>
<text x="1101.6" y="922" text-anchor="middle" class="ax" textLength="18.5" lengthAdjust="spacingAndGlyphs">290</text>
<line x1="1111.5" y1="907" x2="1111.5" y2="910.0" stroke="#000" stroke-width="1" shape-rendering="crispEdges"/>
<line x1="1120.5" y1="907" x2="1120.5" y2="910.0" stroke="#000" stroke-width="1" shape-rendering="crispEdges"/>
<line x1="1128.5" y1="907" x2="1128.5" y2="910.0" stroke="#000" stroke-width="1" shape-rendering="crispEdges"/>
<line x1="1136.5" y1="907" x2="1136.5" y2="910.0" stroke="#000" stroke-width="1" shape-rendering="crispEdges"/>
<line x1="1144.5" y1="907" x2="1144.5" y2="911.5" stroke="#000" stroke-width="1" shape-rendering="crispEdges"/>
<text x="1142.7" y="922" text-anchor="middle" class="ax" textLength="18.5" lengthAdjust="spacingAndGlyphs">295</text>
<line x1="1152.5" y1="907" x2="1152.5" y2="910.0" stroke="#000" stroke-width="1" shape-rendering="crispEdges"/>
<line x1="1161.5" y1="907" x2="1161.5" y2="910.0" stroke="#000" stroke-width="1" shape-rendering="crispEdges"/>
<line x1="1169.5" y1="907" x2="1169.5" y2="910.0" stroke="#000" stroke-width="1" shape-rendering="crispEdges"/>
<line x1="1177.5" y1="907" x2="1177.5" y2="910.0" stroke="#000" stroke-width="1" shape-rendering="crispEdges"/>
<line x1="1185.5" y1="907" x2="1185.5" y2="911.5" stroke="#000" stroke-width="1" shape-rendering="crispEdges"/>
<text x="1183.8" y="922" text-anchor="middle" class="ax" textLength="18.5" lengthAdjust="spacingAndGlyphs">300</text>
<line x1="1194.5" y1="907" x2="1194.5" y2="910.0" stroke="#000" stroke-width="1" shape-rendering="crispEdges"/>
<line x1="1202.5" y1="907" x2="1202.5" y2="910.0" stroke="#000" stroke-width="1" shape-rendering="crispEdges"/>
<line x1="1210.5" y1="907" x2="1210.5" y2="910.0" stroke="#000" stroke-width="1" shape-rendering="crispEdges"/>
<line x1="1218.5" y1="907" x2="1218.5" y2="910.0" stroke="#000" stroke-width="1" shape-rendering="crispEdges"/>
<line x1="1226.5" y1="907" x2="1226.5" y2="911.5" stroke="#000" stroke-width="1" shape-rendering="crispEdges"/>
<text x="1225.0" y="922" text-anchor="middle" class="ax" textLength="18.5" lengthAdjust="spacingAndGlyphs">305</text>
<line x1="1235.5" y1="907" x2="1235.5" y2="910.0" stroke="#000" stroke-width="1" shape-rendering="crispEdges"/>
<line x1="1243.5" y1="907" x2="1243.5" y2="910.0" stroke="#000" stroke-width="1" shape-rendering="crispEdges"/>
<line x1="1251.5" y1="907" x2="1251.5" y2="910.0" stroke="#000" stroke-width="1" shape-rendering="crispEdges"/>
<line x1="1259.5" y1="907" x2="1259.5" y2="910.0" stroke="#000" stroke-width="1" shape-rendering="crispEdges"/>
<line x1="1268.5" y1="907" x2="1268.5" y2="911.5" stroke="#000" stroke-width="1" shape-rendering="crispEdges"/>
<text x="1266.1" y="922" text-anchor="middle" class="ax" textLength="18.5" lengthAdjust="spacingAndGlyphs">310</text>
<line x1="1276.5" y1="907" x2="1276.5" y2="910.0" stroke="#000" stroke-width="1" shape-rendering="crispEdges"/>
<line x1="1284.5" y1="907" x2="1284.5" y2="910.0" stroke="#000" stroke-width="1" shape-rendering="crispEdges"/>
<line x1="1292.5" y1="907" x2="1292.5" y2="910.0" stroke="#000" stroke-width="1" shape-rendering="crispEdges"/>
<line x1="1300.5" y1="907" x2="1300.5" y2="910.0" stroke="#000" stroke-width="1" shape-rendering="crispEdges"/>
<line x1="1309.5" y1="907" x2="1309.5" y2="911.5" stroke="#000" stroke-width="1" shape-rendering="crispEdges"/>
<text x="1307.2" y="922" text-anchor="middle" class="ax" textLength="18.5" lengthAdjust="spacingAndGlyphs">315</text>
<line x1="1317.5" y1="907" x2="1317.5" y2="910.0" stroke="#000" stroke-width="1" shape-rendering="crispEdges"/>
<line x1="1325.5" y1="907" x2="1325.5" y2="910.0" stroke="#000" stroke-width="1" shape-rendering="crispEdges"/>
<line x1="1333.5" y1="907" x2="1333.5" y2="910.0" stroke="#000" stroke-width="1" shape-rendering="crispEdges"/>
<line x1="1342.5" y1="907" x2="1342.5" y2="910.0" stroke="#000" stroke-width="1" shape-rendering="crispEdges"/>
<line x1="1350.5" y1="907" x2="1350.5" y2="911.5" stroke="#000" stroke-width="1" shape-rendering="crispEdges"/>
<text x="1348.3" y="922" text-anchor="middle" class="ax" textLength="18.5" lengthAdjust="spacingAndGlyphs">320</text>
<line x1="1358.5" y1="907" x2="1358.5" y2="910.0" stroke="#000" stroke-width="1" shape-rendering="crispEdges"/>
<line x1="1366.5" y1="907" x2="1366.5" y2="910.0" stroke="#000" stroke-width="1" shape-rendering="crispEdges"/>
<line x1="1374.5" y1="907" x2="1374.5" y2="910.0" stroke="#000" stroke-width="1" shape-rendering="crispEdges"/>
<line x1="1383.5" y1="907" x2="1383.5" y2="910.0" stroke="#000" stroke-width="1" shape-rendering="crispEdges"/>
<line x1="1391.5" y1="907" x2="1391.5" y2="911.5" stroke="#000" stroke-width="1" shape-rendering="crispEdges"/>
<text x="1389.4" y="922" text-anchor="middle" class="ax" textLength="18.5" lengthAdjust="spacingAndGlyphs">325</text>
<line x1="1399.5" y1="907" x2="1399.5" y2="910.0" stroke="#000" stroke-width="1" shape-rendering="crispEdges"/>
<line x1="1407.5" y1="907" x2="1407.5" y2="910.0" stroke="#000" stroke-width="1" shape-rendering="crispEdges"/>
<line x1="1416.5" y1="907" x2="1416.5" y2="910.0" stroke="#000" stroke-width="1" shape-rendering="crispEdges"/>
<line x1="1424.5" y1="907" x2="1424.5" y2="910.0" stroke="#000" stroke-width="1" shape-rendering="crispEdges"/>
<line x1="1432.5" y1="907" x2="1432.5" y2="911.5" stroke="#000" stroke-width="1" shape-rendering="crispEdges"/>
<text x="1430.5" y="922" text-anchor="middle" class="ax" textLength="18.5" lengthAdjust="spacingAndGlyphs">330</text>
<line x1="1440.5" y1="907" x2="1440.5" y2="910.0" stroke="#000" stroke-width="1" shape-rendering="crispEdges"/>
<line x1="1448.5" y1="907" x2="1448.5" y2="910.0" stroke="#000" stroke-width="1" shape-rendering="crispEdges"/>
<line x1="1457.5" y1="907" x2="1457.5" y2="910.0" stroke="#000" stroke-width="1" shape-rendering="crispEdges"/>
<line x1="1465.5" y1="907" x2="1465.5" y2="910.0" stroke="#000" stroke-width="1" shape-rendering="crispEdges"/>
<line x1="1473.5" y1="907" x2="1473.5" y2="911.5" stroke="#000" stroke-width="1" shape-rendering="crispEdges"/>
<text x="1471.6" y="922" text-anchor="middle" class="ax" textLength="18.5" lengthAdjust="spacingAndGlyphs">335</text>
<line x1="1481.5" y1="907" x2="1481.5" y2="910.0" stroke="#000" stroke-width="1" shape-rendering="crispEdges"/>
<line x1="1490.5" y1="907" x2="1490.5" y2="910.0" stroke="#000" stroke-width="1" shape-rendering="crispEdges"/>
<line x1="1498.5" y1="907" x2="1498.5" y2="910.0" stroke="#000" stroke-width="1" shape-rendering="crispEdges"/>
<line x1="1506.5" y1="907" x2="1506.5" y2="910.0" stroke="#000" stroke-width="1" shape-rendering="crispEdges"/>
<line x1="1514.5" y1="907" x2="1514.5" y2="911.5" stroke="#000" stroke-width="1" shape-rendering="crispEdges"/>
<text x="1512.8" y="922" text-anchor="middle" class="ax" textLength="18.5" lengthAdjust="spacingAndGlyphs">340</text>
<line x1="1522.5" y1="907" x2="1522.5" y2="910.0" stroke="#000" stroke-width="1" shape-rendering="crispEdges"/>
<line x1="1531.5" y1="907" x2="1531.5" y2="910.0" stroke="#000" stroke-width="1" shape-rendering="crispEdges"/>
<line x1="1539.5" y1="907" x2="1539.5" y2="910.0" stroke="#000" stroke-width="1" shape-rendering="crispEdges"/>
<line x1="1547.5" y1="907" x2="1547.5" y2="910.0" stroke="#000" stroke-width="1" shape-rendering="crispEdges"/>
<line x1="1555.5" y1="907" x2="1555.5" y2="911.5" stroke="#000" stroke-width="1" shape-rendering="crispEdges"/>
<text x="1553.9" y="922" text-anchor="middle" class="ax" textLength="18.5" lengthAdjust="spacingAndGlyphs">345</text>
<line x1="1564.5" y1="907" x2="1564.5" y2="910.0" stroke="#000" stroke-width="1" shape-rendering="crispEdges"/>
<line x1="1572.5" y1="907" x2="1572.5" y2="910.0" stroke="#000" stroke-width="1" shape-rendering="crispEdges"/>
<line x1="1580.5" y1="907" x2="1580.5" y2="910.0" stroke="#000" stroke-width="1" shape-rendering="crispEdges"/>
<line x1="1588.5" y1="907" x2="1588.5" y2="910.0" stroke="#000" stroke-width="1" shape-rendering="crispEdges"/>
<line x1="1596.5" y1="907" x2="1596.5" y2="911.5" stroke="#000" stroke-width="1" shape-rendering="crispEdges"/>
<text x="1595.0" y="922" text-anchor="middle" class="ax" textLength="18.5" lengthAdjust="spacingAndGlyphs">350</text>
<text x="1062" y="939" text-anchor="middle" class="ax2">Wavelength (nm)</text>
<text transform="translate(476,606) rotate(-90)" text-anchor="middle" class="ax2">10mm Absorbance</text>
<text x="530" y="315" class="ax" style="fill:#b02a2a" textLength="17.5" lengthAdjust="spacingAndGlyphs">B11</text>
<line x1="1062.5" y1="304" x2="1062.5" y2="907" stroke="#000" stroke-width="1.2"/>
<line x1="527" y1="698.5" x2="1597" y2="698.5" stroke="#000" stroke-width="1.2"/>
<path d="M527.5,415.83 L529.5,423.99 L531.5,432.00 L533.5,439.84 L535.5,447.51 L537.5,454.99 L539.5,462.30 L541.5,469.40 L543.5,476.30 L545.5,483.00 L547.5,489.47 L549.5,495.72 L551.5,501.74 L553.5,507.52 L555.5,513.05 L557.5,518.32 L559.5,523.34 L561.5,528.08 L563.5,532.55 L565.5,536.73 L567.5,540.62 L569.5,544.22 L571.5,547.53 L573.5,550.56 L575.5,553.34 L577.5,555.88 L579.5,558.17 L581.5,560.25 L583.5,562.12 L585.5,563.80 L587.5,565.29 L589.5,566.61 L591.5,567.78 L593.5,568.80 L595.5,569.69 L597.5,570.46 L599.5,571.12 L601.5,571.69 L603.5,572.19 L605.5,572.61 L607.5,572.98 L609.5,573.31 L611.5,573.60 L613.5,573.88 L615.5,574.14 L617.5,574.36 L619.5,574.54 L621.5,574.68 L623.5,574.77 L625.5,574.79 L627.5,574.74 L629.5,574.62 L631.5,574.42 L633.5,574.12 L635.5,573.72 L637.5,573.22 L639.5,572.61 L641.5,571.87 L643.5,571.01 L645.5,570.01 L647.5,568.87 L649.5,567.57 L651.5,566.12 L653.5,564.50 L655.5,562.71 L657.5,560.74 L659.5,558.58 L661.5,556.25 L663.5,553.76 L665.5,551.11 L667.5,548.31 L669.5,545.38 L671.5,542.33 L673.5,539.17 L675.5,535.90 L677.5,532.54 L679.5,529.09 L681.5,525.58 L683.5,522.00 L685.5,518.37 L687.5,514.70 L689.5,511.00 L691.5,507.28 L693.5,503.54 L695.5,499.81 L697.5,496.09 L699.5,492.39 L701.5,488.71 L703.5,485.07 L705.5,481.45 L707.5,477.85 L709.5,474.27 L711.5,470.70 L713.5,467.14 L715.5,463.57 L717.5,460.01 L719.5,456.44 L721.5,452.86 L723.5,449.27 L725.5,445.65 L727.5,442.01 L729.5,438.35 L731.5,434.67 L733.5,430.98 L735.5,427.31 L737.5,423.65 L739.5,420.02 L741.5,416.43 L743.5,412.89 L745.5,409.41 L747.5,406.00 L749.5,402.68 L751.5,399.45 L753.5,396.32 L755.5,393.31 L757.5,390.42 L759.5,387.66 L761.5,385.02 L763.5,382.46 L765.5,379.97 L767.5,377.52 L769.5,375.09 L771.5,372.66 L773.5,370.21 L775.5,367.70 L777.5,365.14 L779.5,362.47 L781.5,359.70 L783.5,356.79 L785.5,353.73 L787.5,350.55 L789.5,347.30 L791.5,344.03 L793.5,340.77 L795.5,337.58 L797.5,334.49 L799.5,331.54 L801.5,328.78 L803.5,326.18 L805.5,323.75 L807.5,321.49 L809.5,319.39 L811.5,317.44 L813.5,315.65 L815.5,314.01 L817.5,312.52 L819.5,311.17 L821.5,309.95 L823.5,308.88 L825.5,307.93 L827.5,307.11 L829.5,306.41 L831.5,305.84 L833.5,305.38 L835.5,305.04 L837.5,304.81 L839.5,304.71 L841.5,304.72 L843.5,304.84 L845.5,305.08 L847.5,305.44 L849.5,305.91 L851.5,306.50 L853.5,307.20 L855.5,308.01 L857.5,308.94 L859.5,309.98 L861.5,311.14 L863.5,312.41 L865.5,313.79 L867.5,315.28 L869.5,316.89 L871.5,318.61 L873.5,320.46 L875.5,322.42 L877.5,324.49 L879.5,326.69 L881.5,329.01 L883.5,331.45 L885.5,334.01 L887.5,336.70 L889.5,339.51 L891.5,342.45 L893.5,345.51 L895.5,348.70 L897.5,352.02 L899.5,355.47 L901.5,359.04 L903.5,362.72 L905.5,366.51 L907.5,370.40 L909.5,374.37 L911.5,378.43 L913.5,382.56 L915.5,386.75 L917.5,390.99 L919.5,395.28 L921.5,399.61 L923.5,403.97 L925.5,408.35 L927.5,412.74 L929.5,417.13 L931.5,421.52 L933.5,425.90 L935.5,430.26 L937.5,434.61 L939.5,438.95 L941.5,443.27 L943.5,447.57 L945.5,451.85 L947.5,456.11 L949.5,460.34 L951.5,464.55 L953.5,468.73 L955.5,472.88 L957.5,477.01 L959.5,481.10 L961.5,485.15 L963.5,489.17 L965.5,493.15 L967.5,497.10 L969.5,501.00 L971.5,504.86 L973.5,508.71 L975.5,512.60 L977.5,516.59 L979.5,520.75 L981.5,525.15 L983.5,529.77 L985.5,534.56 L987.5,539.48 L989.5,544.47 L991.5,549.47 L993.5,554.42 L995.5,559.29 L997.5,564.09 L999.5,568.82 L1001.5,573.49 L1003.5,578.08 L1005.5,582.62 L1007.5,587.10 L1009.5,591.53 L1011.5,595.91 L1013.5,600.24 L1015.5,604.53 L1017.5,608.78 L1019.5,612.99 L1021.5,617.17 L1023.5,621.32 L1025.5,625.44 L1027.5,629.54 L1029.5,633.62 L1031.5,637.69 L1033.5,641.74 L1035.5,645.79 L1037.5,649.83 L1039.5,653.87 L1041.5,657.90 L1043.5,661.93 L1045.5,665.95 L1047.5,669.96 L1049.5,673.96 L1051.5,677.95 L1053.5,681.93 L1055.5,685.90 L1057.5,689.86 L1059.5,693.80 L1061.5,697.73 L1063.5,701.64 L1065.5,705.53 L1067.5,709.41 L1069.5,713.26 L1071.5,717.09 L1073.5,720.91 L1075.5,724.70 L1077.5,728.46 L1079.5,732.21 L1081.5,735.92 L1083.5,739.61 L1085.5,743.27 L1087.5,746.90 L1089.5,750.50 L1091.5,754.07 L1093.5,757.60 L1095.5,761.11 L1097.5,764.57 L1099.5,768.00 L1101.5,771.39 L1103.5,774.75 L1105.5,778.06 L1107.5,781.34 L1109.5,784.57 L1111.5,787.76 L1113.5,790.91 L1115.5,794.01 L1117.5,797.06 L1119.5,800.07 L1121.5,803.03 L1123.5,805.93 L1125.5,808.79 L1127.5,811.60 L1129.5,814.35 L1131.5,817.05 L1133.5,819.69 L1135.5,822.28 L1137.5,824.81 L1139.5,827.28 L1141.5,829.69 L1143.5,832.04 L1145.5,834.33 L1147.5,836.55 L1149.5,838.71 L1151.5,840.81 L1153.5,842.83 L1155.5,844.80 L1157.5,846.69 L1159.5,848.53 L1161.5,850.30 L1163.5,852.01 L1165.5,853.66 L1167.5,855.25 L1169.5,856.78 L1171.5,858.26 L1173.5,859.68 L1175.5,861.05 L1177.5,862.37 L1179.5,863.63 L1181.5,864.85 L1183.5,866.02 L1185.5,867.13 L1187.5,868.21 L1189.5,869.23 L1191.5,870.22 L1193.5,871.16 L1195.5,872.06 L1197.5,872.92 L1199.5,873.74 L1201.5,874.52 L1203.5,875.27 L1205.5,875.98 L1207.5,876.66 L1209.5,877.31 L1211.5,877.92 L1213.5,878.51 L1215.5,879.06 L1217.5,879.59 L1219.5,880.09 L1221.5,880.57 L1223.5,881.02 L1225.5,881.45 L1227.5,881.86 L1229.5,882.24 L1231.5,882.61 L1233.5,882.97 L1235.5,883.30 L1237.5,883.62 L1239.5,883.93 L1241.5,884.22 L1243.5,884.50 L1245.5,884.77 L1247.5,885.03 L1249.5,885.29 L1251.5,885.54 L1253.5,885.78 L1255.5,886.02 L1257.5,886.25 L1259.5,886.48 L1261.5,886.71 L1263.5,886.93 L1265.5,887.14 L1267.5,887.36 L1269.5,887.57 L1271.5,887.77 L1273.5,887.97 L1275.5,888.17 L1277.5,888.36 L1279.5,888.55 L1281.5,888.73 L1283.5,888.91 L1285.5,889.09 L1287.5,889.26 L1289.5,889.43 L1291.5,889.59 L1293.5,889.76 L1295.5,889.91 L1297.5,890.07 L1299.5,890.22 L1301.5,890.37 L1303.5,890.51 L1305.5,890.65 L1307.5,890.79 L1309.5,890.92 L1311.5,891.05 L1313.5,891.18 L1315.5,891.30 L1317.5,891.43 L1319.5,891.54 L1321.5,891.66 L1323.5,891.77 L1325.5,891.88 L1327.5,891.98 L1329.5,892.09 L1331.5,892.19 L1333.5,892.28 L1335.5,892.38 L1337.5,892.47 L1339.5,892.56 L1341.5,892.64 L1343.5,892.72 L1345.5,892.81 L1347.5,892.88 L1349.5,892.96 L1351.5,893.03 L1353.5,893.10 L1355.5,893.17 L1357.5,893.24 L1359.5,893.30 L1361.5,893.36 L1363.5,893.42 L1365.5,893.48 L1367.5,893.53 L1369.5,893.58 L1371.5,893.63 L1373.5,893.68 L1375.5,893.73 L1377.5,893.77 L1379.5,893.81 L1381.5,893.85 L1383.5,893.89 L1385.5,893.93 L1387.5,893.96 L1389.5,894.00 L1391.5,894.03 L1393.5,894.06 L1395.5,894.09 L1397.5,894.11 L1399.5,894.14 L1401.5,894.16 L1403.5,894.19 L1405.5,894.21 L1407.5,894.23 L1409.5,894.24 L1411.5,894.26 L1413.5,894.28 L1415.5,894.29 L1417.5,894.30 L1419.5,894.32 L1421.5,894.33 L1423.5,894.34 L1425.5,894.35 L1427.5,894.36 L1429.5,894.36 L1431.5,894.37 L1433.5,894.38 L1435.5,894.38 L1437.5,894.38 L1439.5,894.39 L1441.5,894.39 L1443.5,894.39 L1445.5,894.39 L1447.5,894.39 L1449.5,894.40 L1451.5,894.39 L1453.5,894.39 L1455.5,894.39 L1457.5,894.39 L1459.5,894.39 L1461.5,894.39 L1463.5,894.39 L1465.5,894.39 L1467.5,894.38 L1469.5,894.38 L1471.5,894.38 L1473.5,894.38 L1475.5,894.37 L1477.5,894.37 L1479.5,894.37 L1481.5,894.37 L1483.5,894.36 L1485.5,894.36 L1487.5,894.36 L1489.5,894.36 L1491.5,894.36 L1493.5,894.36 L1495.5,894.36 L1497.5,894.36 L1499.5,894.36 L1501.5,894.36 L1503.5,894.36 L1505.5,894.37 L1507.5,894.37 L1509.5,894.37 L1511.5,894.38 L1513.5,894.38 L1515.5,894.39 L1517.5,894.40 L1519.5,894.41 L1521.5,894.41 L1523.5,894.43 L1525.5,894.44 L1527.5,894.45 L1529.5,894.46 L1531.5,894.48 L1533.5,894.49 L1535.5,894.51 L1537.5,894.53 L1539.5,894.55 L1541.5,894.57 L1543.5,894.59 L1545.5,894.61 L1547.5,894.64 L1549.5,894.67 L1551.5,894.69 L1553.5,894.72 L1555.5,894.76 L1557.5,894.79 L1559.5,894.82 L1561.5,894.86 L1563.5,894.90 L1565.5,894.94 L1567.5,894.98 L1569.5,895.03 L1571.5,895.07 L1573.5,895.12 L1575.5,895.17 L1577.5,895.22 L1579.5,895.28 L1581.5,895.34 L1583.5,895.39 L1585.5,895.46 L1587.5,895.52 L1589.5,895.58 L1591.5,895.65 L1593.5,895.72 L1595.5,895.80" fill="none" stroke="#a82828" stroke-width="1.1"/></svg>
<svg class="a" style="left:1594px;top:926px" width="18" height="15">
<rect x="0.5" y="0.5" width="17" height="14" rx="3" fill="#fff" stroke="#c8c8c8"/>
<path d="M7,2.5 L2.5,7.5 L7,12.5 L10,12.5 L6.5,7.5 L10,2.5 Z M13,2.5 L9.5,7.5 L13,12.5 L15.5,12.5 L12.5,7.5 L15.5,2.5 Z" fill="#3d6d8e"/></svg>
<div class="a" style="left:462px;top:950px;width:1129px;height:24px;background:#ededf8;border-top:1px solid #a0a0a0;border-left:1px solid #a0a0a0;border-bottom:1px solid #fff;border-right:1px solid #fff"></div>
<div class="t" style="left:466px;top:953px;font-size:14.67px">285nm 1.714Abs</div>
<svg class="a" style="left:1596px;top:949px" width="18" height="24">
<rect x="0.5" y="0.5" width="17" height="23" rx="3" fill="#fff" stroke="#c8c8c8"/>
<path d="M2.5,4 L9,8 L15.5,4 L15.5,7.5 L9,11.5 L2.5,7.5 Z M2.5,11.5 L9,15.5 L15.5,11.5 L15.5,15 L9,19 L2.5,15 Z" fill="#3d6d8e"/></svg>
<div class="t" style="left:1621px;top:305px;font-size:14.67px;color:#000">Sample ID:</div>
<div class="a" style="left:1697px;top:301px;width:146px;height:23px;background:#fff;border-bottom:2px solid #1060b0"></div>
<div class="a" style="left:1757px;top:303px;width:26px;height:17px;background:#0078d7"></div>
<div class="t" style="left:1757px;top:305px;font-size:14.67px;color:#fff">B11</div>
<div class="t" style="left:1849px;top:304px;font-size:15px;font-weight:bold;color:#000">Pedestal</div>
<div class="t" style="left:1646px;top:345px;font-size:14.67px;color:#000">Type:</div>
<div class="a" style="left:1696px;top:340px;width:106px;height:23px;background:#ffbdff"></div>
<div class="a" style="left:1802px;top:340px;width:18px;height:23px;background:#ececec;border:1px solid #f6f6f6"></div>
<svg class="a" style="left:1808px;top:349px" width="7" height="4"><path d="M0,0 L7,0 L3.5,4 Z" fill="#111"/></svg>
<div class="t" style="left:1699px;top:345px;font-size:14.67px;color:#000">RNA</div>
<div class="a" style="left:1826px;top:341px;width:70px;height:23px;background:#efefef;border:1px solid #e2e2e2;border-bottom:1px solid #888"></div>
<div class="t" style="left:1829px;top:345px;font-size:14.67px;color:#000">40.00</div>
<div class="t" style="left:1643px;top:380px;font-size:14.67px;color:#000">Conc.</div>
<div class="a" style="left:1696px;top:378px;width:123px;height:22px;background:#ffbdff;border-bottom:1px solid #888"></div>
<div class="t" style="right:103px;top:381px;font-size:14.67px;font-weight:bold;color:#000">205.3</div>
<div class="a" style="left:1825px;top:375px;width:72px;height:26px;background:#fff;border:1px solid #ddd;border-radius:2px"></div>
<div class="t" style="left:1829px;top:381px;font-size:14.67px;font-weight:bold;color:#000">ng/µl</div>
<svg class="a" style="left:1883px;top:385px" width="10" height="6"><path d="M0.5,0.5 L5,5 L9.5,0.5" fill="none" stroke="#555" stroke-width="1"/></svg>
<div class="t" style="right:105px;top:414px;font-size:14.67px;color:#000">A260 (10 mm path)</div>
<div class="a" style="left:1825px;top:411px;width:71px;height:20px;background:#ebebf3;border-top:1px solid #9a9a9a;border-left:1px solid #9a9a9a;border-bottom:1px solid #fff;border-right:1px solid #fff"></div>
<div class="t" style="right:29px;top:414px;font-size:14.67px;font-weight:bold;color:#000">5.131</div>
<div class="t" style="right:105px;top:444px;font-size:14.67px;color:#000">A280 (10 mm path)</div>
<div class="a" style="left:1825px;top:441px;width:71px;height:20px;background:#ebebf3;border-top:1px solid #9a9a9a;border-left:1px solid #9a9a9a;border-bottom:1px solid #fff;border-right:1px solid #fff"></div>
<div class="t" style="right:29px;top:444px;font-size:14.67px;font-weight:bold;color:#000">2.432</div>
<div class="t" style="right:105px;top:474px;font-size:14.67px;color:#000">260 / 280</div>
<div class="a" style="left:1825px;top:471px;width:71px;height:20px;background:#ebebf3;border-top:1px solid #9a9a9a;border-left:1px solid #9a9a9a;border-bottom:1px solid #fff;border-right:1px solid #fff"></div>
<div class="t" style="right:29px;top:474px;font-size:14.67px;font-weight:bold;color:#000">2.11</div>
<div class="t" style="right:105px;top:504px;font-size:14.67px;color:#000">260 / 230</div>
<div class="a" style="left:1825px;top:501px;width:71px;height:20px;background:#ebebf3;border-top:1px solid #9a9a9a;border-left:1px solid #9a9a9a;border-bottom:1px solid #fff;border-right:1px solid #fff"></div>
<div class="t" style="right:29px;top:504px;font-size:14.67px;font-weight:bold;color:#000">1.82</div>
<div class="a" style="left:1668px;top:538px;width:13px;height:13px;background:#0f62c0;border-radius:2.5px"></div>
<svg class="a" style="left:1668px;top:538px" width="13" height="13"><path d="M3.2,6.8 L5.6,9 L10,4.2" fill="none" stroke="#fff" stroke-width="1.1"/></svg>
<div class="t" style="left:1688px;top:538px;font-size:14.67px;color:#000">Baseline correction</div>
<div class="a" style="left:1826px;top:533px;width:42px;height:23px;background:#fff;border-bottom:1px solid #999"></div>
<div class="t" style="left:1834px;top:538px;font-size:14.67px;color:#000">340</div>
<div class="t" style="left:1874px;top:538px;font-size:14.67px;color:#000">nm</div>
<div class="a" style="left:462px;top:984px;width:1453px;height:229px;background:#ededf8;border-top:1.6px solid #000;border-left:2px solid #000;border-right:1.5px solid #111;border-bottom:1.5px solid #111"></div>
<div class="a" style="left:464px;top:986px;width:1127px;height:23px;background:#fff"></div>
<div class="a" style="left:504px;top:986px;width:1px;height:23px;background:#e4e4e4"></div>
<div class="a" style="left:615px;top:986px;width:1px;height:23px;background:#e4e4e4"></div>
<div class="a" style="left:720px;top:986px;width:1px;height:23px;background:#e4e4e4"></div>
<div class="a" style="left:848px;top:986px;width:1px;height:23px;background:#e4e4e4"></div>
<div class="a" style="left:960px;top:986px;width:1px;height:23px;background:#e4e4e4"></div>
<div class="a" style="left:1018px;top:986px;width:1px;height:23px;background:#e4e4e4"></div>
<div class="a" style="left:1123px;top:986px;width:1px;height:23px;background:#e4e4e4"></div>
<div class="a" style="left:1228px;top:986px;width:1px;height:23px;background:#e4e4e4"></div>
<div class="a" style="left:1313px;top:986px;width:1px;height:23px;background:#e4e4e4"></div>
<div class="a" style="left:1398px;top:986px;width:1px;height:23px;background:#e4e4e4"></div>
<div class="a" style="left:1517px;top:986px;width:1px;height:23px;background:#e4e4e4"></div>
<div class="t" style="left:472px;top:991px;font-size:14.67px">#</div>
<div class="t" style="left:512px;top:991px;font-size:14.67px">Sample ID</div>
<div class="t" style="left:623px;top:991px;font-size:14.67px">User name</div>
<div class="t" style="left:728px;top:991px;font-size:14.67px">Date and Time</div>
<div class="t" style="left:856px;top:991px;font-size:14.67px">Nucleic Acid</div>
<div class="t" style="left:968px;top:991px;font-size:14.67px">Unit</div>
<div class="t" style="left:1026px;top:991px;font-size:14.67px">A260 (Abs)</div>
<div class="t" style="left:1131px;top:991px;font-size:14.67px">A280 (Abs)</div>
<div class="t" style="left:1236px;top:991px;font-size:14.67px">260/280</div>
<div class="t" style="left:1321px;top:991px;font-size:14.67px">260/230</div>
<div class="t" style="left:1406px;top:991px;font-size:14.67px">Sample Type</div>
<div class="t" style="left:1525px;top:991px;font-size:14.67px">Factor</div>
<div class="a" style="left:464px;top:1009px;width:1127px;height:21px;background:#fff;border-top:1px solid #a0a0a0"></div>
<div class="a" style="left:504px;top:1009px;width:1px;height:21px;background:#a0a0a0"></div>
<div class="a" style="left:615px;top:1009px;width:1px;height:21px;background:#a0a0a0"></div>
<div class="a" style="left:720px;top:1009px;width:1px;height:21px;background:#a0a0a0"></div>
<div class="a" style="left:848px;top:1009px;width:1px;height:21px;background:#a0a0a0"></div>
<div class="a" style="left:960px;top:1009px;width:1px;height:21px;background:#a0a0a0"></div>
<div class="a" style="left:1018px;top:1009px;width:1px;height:21px;background:#a0a0a0"></div>
<div class="a" style="left:1123px;top:1009px;width:1px;height:21px;background:#a0a0a0"></div>
<div class="a" style="left:1228px;top:1009px;width:1px;height:21px;background:#a0a0a0"></div>
<div class="a" style="left:1313px;top:1009px;width:1px;height:21px;background:#a0a0a0"></div>
<div class="a" style="left:1398px;top:1009px;width:1px;height:21px;background:#a0a0a0"></div>
<div class="a" style="left:1517px;top:1009px;width:1px;height:21px;background:#a0a0a0"></div>
<div class="a" style="left:1591px;top:1009px;width:1px;height:21px;background:#a0a0a0"></div>
<div class="t" style="left:467px;top:1014px;font-size:14.67px;color:#000">2</div>
<div class="t" style="left:507px;top:1014px;font-size:14.67px;color:#000">B04</div>
<div class="t" style="left:618px;top:1014px;font-size:14.67px;color:#000">TP-SSV</div>
<div class="t" style="left:723px;top:1014px;font-size:14.67px;color:#000">04.10.2024 11:06</div>
<div class="t" style="left:851px;top:1014px;font-size:14.67px;color:#000">505.7</div>
<div class="t" style="left:963px;top:1014px;font-size:14.67px;color:#000">ng/µl</div>
<div class="t" style="left:1021px;top:1014px;font-size:14.67px;color:#000">12.641</div>
<div class="t" style="left:1126px;top:1014px;font-size:14.67px;color:#000">5.987</div>
<div class="t" style="left:1231px;top:1014px;font-size:14.67px;color:#000">2.11</div>
<div class="t" style="left:1316px;top:1014px;font-size:14.67px;color:#000">2.07</div>
<div class="t" style="left:1401px;top:1014px;font-size:14.67px;color:#000">RNA</div>
<div class="t" style="left:1520px;top:1014px;font-size:14.67px;color:#000">40.00</div>
<div class="a" style="left:464px;top:1030px;width:1127px;height:21px;background:#fff;border-top:1px solid #a0a0a0"></div>
<div class="a" style="left:504px;top:1030px;width:1px;height:21px;background:#a0a0a0"></div>
<div class="a" style="left:615px;top:1030px;width:1px;height:21px;background:#a0a0a0"></div>
<div class="a" style="left:720px;top:1030px;width:1px;height:21px;background:#a0a0a0"></div>
<div class="a" style="left:848px;top:1030px;width:1px;height:21px;background:#a0a0a0"></div>
<div class="a" style="left:960px;top:1030px;width:1px;height:21px;background:#a0a0a0"></div>
<div class="a" style="left:1018px;top:1030px;width:1px;height:21px;background:#a0a0a0"></div>
<div class="a" style="left:1123px;top:1030px;width:1px;height:21px;background:#a0a0a0"></div>
<div class="a" style="left:1228px;top:1030px;width:1px;height:21px;background:#a0a0a0"></div>
<div class="a" style="left:1313px;top:1030px;width:1px;height:21px;background:#a0a0a0"></div>
<div class="a" style="left:1398px;top:1030px;width:1px;height:21px;background:#a0a0a0"></div>
<div class="a" style="left:1517px;top:1030px;width:1px;height:21px;background:#a0a0a0"></div>
<div class="a" style="left:1591px;top:1030px;width:1px;height:21px;background:#a0a0a0"></div>
<div class="t" style="left:467px;top:1035px;font-size:14.67px;color:#000">3</div>
<div class="t" style="left:507px;top:1035px;font-size:14.67px;color:#000">B03</div>
<div class="t" style="left:618px;top:1035px;font-size:14.67px;color:#000">TP-SSV</div>
<div class="t" style="left:723px;top:1035px;font-size:14.67px;color:#000">04.10.2024 11:08</div>
<div class="t" style="left:851px;top:1035px;font-size:14.67px;color:#000">263.5</div>
<div class="t" style="left:963px;top:1035px;font-size:14.67px;color:#000">ng/µl</div>
<div class="t" style="left:1021px;top:1035px;font-size:14.67px;color:#000">6.587</div>
<div class="t" style="left:1126px;top:1035px;font-size:14.67px;color:#000">3.161</div>
<div class="t" style="left:1231px;top:1035px;font-size:14.67px;color:#000">2.08</div>
<div class="t" style="left:1316px;top:1035px;font-size:14.67px;color:#000">2.03</div>
<div class="t" style="left:1401px;top:1035px;font-size:14.67px;color:#000">RNA</div>
<div class="t" style="left:1520px;top:1035px;font-size:14.67px;color:#000">40.00</div>
<div class="a" style="left:464px;top:1051px;width:1127px;height:21px;background:#fff;border-top:1px solid #a0a0a0"></div>
<div class="a" style="left:504px;top:1051px;width:1px;height:21px;background:#a0a0a0"></div>
<div class="a" style="left:615px;top:1051px;width:1px;height:21px;background:#a0a0a0"></div>
<div class="a" style="left:720px;top:1051px;width:1px;height:21px;background:#a0a0a0"></div>
<div class="a" style="left:848px;top:1051px;width:1px;height:21px;background:#a0a0a0"></div>
<div class="a" style="left:960px;top:1051px;width:1px;height:21px;background:#a0a0a0"></div>
<div class="a" style="left:1018px;top:1051px;width:1px;height:21px;background:#a0a0a0"></div>
<div class="a" style="left:1123px;top:1051px;width:1px;height:21px;background:#a0a0a0"></div>
<div class="a" style="left:1228px;top:1051px;width:1px;height:21px;background:#a0a0a0"></div>
<div class="a" style="left:1313px;top:1051px;width:1px;height:21px;background:#a0a0a0"></div>
<div class="a" style="left:1398px;top:1051px;width:1px;height:21px;background:#a0a0a0"></div>
<div class="a" style="left:1517px;top:1051px;width:1px;height:21px;background:#a0a0a0"></div>
<div class="a" style="left:1591px;top:1051px;width:1px;height:21px;background:#a0a0a0"></div>
<div class="t" style="left:467px;top:1056px;font-size:14.67px;color:#000">4</div>
<div class="t" style="left:507px;top:1056px;font-size:14.67px;color:#000">B01_02_control</div>
<div class="t" style="left:618px;top:1056px;font-size:14.67px;color:#000">TP-SSV</div>
<div class="t" style="left:723px;top:1056px;font-size:14.67px;color:#000">04.10.2024 11:14</div>
<div class="t" style="left:851px;top:1056px;font-size:14.67px;color:#000">545.9</div>
<div class="t" style="left:963px;top:1056px;font-size:14.67px;color:#000">ng/µl</div>
<div class="t" style="left:1021px;top:1056px;font-size:14.67px;color:#000">13.647</div>
<div class="t" style="left:1126px;top:1056px;font-size:14.67px;color:#000">6.457</div>
<div class="t" style="left:1231px;top:1056px;font-size:14.67px;color:#000">2.11</div>
<div class="t" style="left:1316px;top:1056px;font-size:14.67px;color:#000">2.23</div>
<div class="t" style="left:1401px;top:1056px;font-size:14.67px;color:#000">RNA</div>
<div class="t" style="left:1520px;top:1056px;font-size:14.67px;color:#000">40.00</div>
<div class="a" style="left:464px;top:1072px;width:1127px;height:21px;background:#fff;border-top:1px solid #a0a0a0"></div>
<div class="a" style="left:504px;top:1072px;width:1px;height:21px;background:#a0a0a0"></div>
<div class="a" style="left:615px;top:1072px;width:1px;height:21px;background:#a0a0a0"></div>
<div class="a" style="left:720px;top:1072px;width:1px;height:21px;background:#a0a0a0"></div>
<div class="a" style="left:848px;top:1072px;width:1px;height:21px;background:#a0a0a0"></div>
<div class="a" style="left:960px;top:1072px;width:1px;height:21px;background:#a0a0a0"></div>
<div class="a" style="left:1018px;top:1072px;width:1px;height:21px;background:#a0a0a0"></div>
<div class="a" style="left:1123px;top:1072px;width:1px;height:21px;background:#a0a0a0"></div>
<div class="a" style="left:1228px;top:1072px;width:1px;height:21px;background:#a0a0a0"></div>
<div class="a" style="left:1313px;top:1072px;width:1px;height:21px;background:#a0a0a0"></div>
<div class="a" style="left:1398px;top:1072px;width:1px;height:21px;background:#a0a0a0"></div>
<div class="a" style="left:1517px;top:1072px;width:1px;height:21px;background:#a0a0a0"></div>
<div class="a" style="left:1591px;top:1072px;width:1px;height:21px;background:#a0a0a0"></div>
<div class="t" style="left:467px;top:1077px;font-size:14.67px;color:#000">5</div>
<div class="t" style="left:507px;top:1077px;font-size:14.67px;color:#000">B01</div>
<div class="t" style="left:618px;top:1077px;font-size:14.67px;color:#000">TP-SSV</div>
<div class="t" style="left:723px;top:1077px;font-size:14.67px;color:#000">04.10.2024 11:15</div>
<div class="t" style="left:851px;top:1077px;font-size:14.67px;color:#000">113.8</div>
<div class="t" style="left:963px;top:1077px;font-size:14.67px;color:#000">ng/µl</div>
<div class="t" style="left:1021px;top:1077px;font-size:14.67px;color:#000">2.844</div>
<div class="t" style="left:1126px;top:1077px;font-size:14.67px;color:#000">1.373</div>
<div class="t" style="left:1231px;top:1077px;font-size:14.67px;color:#000">2.07</div>
<div class="t" style="left:1316px;top:1077px;font-size:14.67px;color:#000">0.37</div>
<div class="t" style="left:1401px;top:1077px;font-size:14.67px;color:#000">RNA</div>
<div class="t" style="left:1520px;top:1077px;font-size:14.67px;color:#000">40.00</div>
<div class="a" style="left:464px;top:1093px;width:1127px;height:21px;background:#fff;border-top:1px solid #a0a0a0"></div>
<div class="a" style="left:504px;top:1093px;width:1px;height:21px;background:#a0a0a0"></div>
<div class="a" style="left:615px;top:1093px;width:1px;height:21px;background:#a0a0a0"></div>
<div class="a" style="left:720px;top:1093px;width:1px;height:21px;background:#a0a0a0"></div>
<div class="a" style="left:848px;top:1093px;width:1px;height:21px;background:#a0a0a0"></div>
<div class="a" style="left:960px;top:1093px;width:1px;height:21px;background:#a0a0a0"></div>
<div class="a" style="left:1018px;top:1093px;width:1px;height:21px;background:#a0a0a0"></div>
<div class="a" style="left:1123px;top:1093px;width:1px;height:21px;background:#a0a0a0"></div>
<div class="a" style="left:1228px;top:1093px;width:1px;height:21px;background:#a0a0a0"></div>
<div class="a" style="left:1313px;top:1093px;width:1px;height:21px;background:#a0a0a0"></div>
<div class="a" style="left:1398px;top:1093px;width:1px;height:21px;background:#a0a0a0"></div>
<div class="a" style="left:1517px;top:1093px;width:1px;height:21px;background:#a0a0a0"></div>
<div class="a" style="left:1591px;top:1093px;width:1px;height:21px;background:#a0a0a0"></div>
<div class="t" style="left:467px;top:1098px;font-size:14.67px;color:#000">6</div>
<div class="t" style="left:507px;top:1098px;font-size:14.67px;color:#000">B02</div>
<div class="t" style="left:618px;top:1098px;font-size:14.67px;color:#000">TP-SSV</div>
<div class="t" style="left:723px;top:1098px;font-size:14.67px;color:#000">04.10.2024 11:16</div>
<div class="t" style="left:851px;top:1098px;font-size:14.67px;color:#000">155.2</div>
<div class="t" style="left:963px;top:1098px;font-size:14.67px;color:#000">ng/µl</div>
<div class="t" style="left:1021px;top:1098px;font-size:14.67px;color:#000">3.880</div>
<div class="t" style="left:1126px;top:1098px;font-size:14.67px;color:#000">1.958</div>
<div class="t" style="left:1231px;top:1098px;font-size:14.67px;color:#000">1.98</div>
<div class="t" style="left:1316px;top:1098px;font-size:14.67px;color:#000">1.55</div>
<div class="t" style="left:1401px;top:1098px;font-size:14.67px;color:#000">RNA</div>
<div class="t" style="left:1520px;top:1098px;font-size:14.67px;color:#000">40.00</div>
<div class="a" style="left:464px;top:1114px;width:1127px;height:21px;background:#fff;border-top:1px solid #a0a0a0"></div>
<div class="a" style="left:504px;top:1114px;width:1px;height:21px;background:#a0a0a0"></div>
<div class="a" style="left:615px;top:1114px;width:1px;height:21px;background:#a0a0a0"></div>
<div class="a" style="left:720px;top:1114px;width:1px;height:21px;background:#a0a0a0"></div>
<div class="a" style="left:848px;top:1114px;width:1px;height:21px;background:#a0a0a0"></div>
<div class="a" style="left:960px;top:1114px;width:1px;height:21px;background:#a0a0a0"></div>
<div class="a" style="left:1018px;top:1114px;width:1px;height:21px;background:#a0a0a0"></div>
<div class="a" style="left:1123px;top:1114px;width:1px;height:21px;background:#a0a0a0"></div>
<div class="a" style="left:1228px;top:1114px;width:1px;height:21px;background:#a0a0a0"></div>
<div class="a" style="left:1313px;top:1114px;width:1px;height:21px;background:#a0a0a0"></div>
<div class="a" style="left:1398px;top:1114px;width:1px;height:21px;background:#a0a0a0"></div>
<div class="a" style="left:1517px;top:1114px;width:1px;height:21px;background:#a0a0a0"></div>
<div class="a" style="left:1591px;top:1114px;width:1px;height:21px;background:#a0a0a0"></div>
<div class="t" style="left:467px;top:1119px;font-size:14.67px;color:#000">7</div>
<div class="t" style="left:507px;top:1119px;font-size:14.67px;color:#000">B</div>
<div class="t" style="left:618px;top:1119px;font-size:14.67px;color:#000">TP-SSV</div>
<div class="t" style="left:723px;top:1119px;font-size:14.67px;color:#000">04.10.2024 11:25</div>
<div class="t" style="left:851px;top:1119px;font-size:14.67px;color:#000">-0.2</div>
<div class="t" style="left:963px;top:1119px;font-size:14.67px;color:#000">ng/µl</div>
<div class="t" style="left:1021px;top:1119px;font-size:14.67px;color:#000">-0.005</div>
<div class="t" style="left:1126px;top:1119px;font-size:14.67px;color:#000">-0.013</div>
<div class="t" style="left:1231px;top:1119px;font-size:14.67px;color:#000">0.37</div>
<div class="t" style="left:1316px;top:1119px;font-size:14.67px;color:#000">-6.50</div>
<div class="t" style="left:1401px;top:1119px;font-size:14.67px;color:#000">RNA</div>
<div class="t" style="left:1520px;top:1119px;font-size:14.67px;color:#000">40.00</div>
<div class="a" style="left:464px;top:1135px;width:1127px;height:21px;background:#fff;border-top:1px solid #a0a0a0"></div>
<div class="a" style="left:504px;top:1135px;width:1px;height:21px;background:#a0a0a0"></div>
<div class="a" style="left:615px;top:1135px;width:1px;height:21px;background:#a0a0a0"></div>
<div class="a" style="left:720px;top:1135px;width:1px;height:21px;background:#a0a0a0"></div>
<div class="a" style="left:848px;top:1135px;width:1px;height:21px;background:#a0a0a0"></div>
<div class="a" style="left:960px;top:1135px;width:1px;height:21px;background:#a0a0a0"></div>
<div class="a" style="left:1018px;top:1135px;width:1px;height:21px;background:#a0a0a0"></div>
<div class="a" style="left:1123px;top:1135px;width:1px;height:21px;background:#a0a0a0"></div>
<div class="a" style="left:1228px;top:1135px;width:1px;height:21px;background:#a0a0a0"></div>
<div class="a" style="left:1313px;top:1135px;width:1px;height:21px;background:#a0a0a0"></div>
<div class="a" style="left:1398px;top:1135px;width:1px;height:21px;background:#a0a0a0"></div>
<div class="a" style="left:1517px;top:1135px;width:1px;height:21px;background:#a0a0a0"></div>
<div class="a" style="left:1591px;top:1135px;width:1px;height:21px;background:#a0a0a0"></div>
<div class="t" style="left:467px;top:1140px;font-size:14.67px;color:#000">8</div>
<div class="t" style="left:507px;top:1140px;font-size:14.67px;color:#000">B11_12_control</div>
<div class="t" style="left:618px;top:1140px;font-size:14.67px;color:#000">TP-SSV</div>
<div class="t" style="left:723px;top:1140px;font-size:14.67px;color:#000">04.10.2024 11:28</div>
<div class="t" style="left:851px;top:1140px;font-size:14.67px;color:#000">550.0</div>
<div class="t" style="left:963px;top:1140px;font-size:14.67px;color:#000">ng/µl</div>
<div class="t" style="left:1021px;top:1140px;font-size:14.67px;color:#000">13.750</div>
<div class="t" style="left:1126px;top:1140px;font-size:14.67px;color:#000">6.325</div>
<div class="t" style="left:1231px;top:1140px;font-size:14.67px;color:#000">2.17</div>
<div class="t" style="left:1316px;top:1140px;font-size:14.67px;color:#000">2.22</div>
<div class="t" style="left:1401px;top:1140px;font-size:14.67px;color:#000">RNA</div>
<div class="t" style="left:1520px;top:1140px;font-size:14.67px;color:#000">40.00</div>
<div class="a" style="left:464px;top:1156px;width:1127px;height:21px;background:#fff;border-top:1px solid #a0a0a0"></div>
<div class="a" style="left:504px;top:1156px;width:1px;height:21px;background:#a0a0a0"></div>
<div class="a" style="left:615px;top:1156px;width:1px;height:21px;background:#a0a0a0"></div>
<div class="a" style="left:720px;top:1156px;width:1px;height:21px;background:#a0a0a0"></div>
<div class="a" style="left:848px;top:1156px;width:1px;height:21px;background:#a0a0a0"></div>
<div class="a" style="left:960px;top:1156px;width:1px;height:21px;background:#a0a0a0"></div>
<div class="a" style="left:1018px;top:1156px;width:1px;height:21px;background:#a0a0a0"></div>
<div class="a" style="left:1123px;top:1156px;width:1px;height:21px;background:#a0a0a0"></div>
<div class="a" style="left:1228px;top:1156px;width:1px;height:21px;background:#a0a0a0"></div>
<div class="a" style="left:1313px;top:1156px;width:1px;height:21px;background:#a0a0a0"></div>
<div class="a" style="left:1398px;top:1156px;width:1px;height:21px;background:#a0a0a0"></div>
<div class="a" style="left:1517px;top:1156px;width:1px;height:21px;background:#a0a0a0"></div>
<div class="a" style="left:1591px;top:1156px;width:1px;height:21px;background:#a0a0a0"></div>
<div class="t" style="left:467px;top:1161px;font-size:14.67px;color:#000">9</div>
<div class="t" style="left:507px;top:1161px;font-size:14.67px;color:#000">B12</div>
<div class="t" style="left:618px;top:1161px;font-size:14.67px;color:#000">TP-SSV</div>
<div class="t" style="left:723px;top:1161px;font-size:14.67px;color:#000">04.10.2024 11:29</div>
<div class="t" style="left:851px;top:1161px;font-size:14.67px;color:#000">263.5</div>
<div class="t" style="left:963px;top:1161px;font-size:14.67px;color:#000">ng/µl</div>
<div class="t" style="left:1021px;top:1161px;font-size:14.67px;color:#000">6.588</div>
<div class="t" style="left:1126px;top:1161px;font-size:14.67px;color:#000">3.104</div>
<div class="t" style="left:1231px;top:1161px;font-size:14.67px;color:#000">2.12</div>
<div class="t" style="left:1316px;top:1161px;font-size:14.67px;color:#000">1.84</div>
<div class="t" style="left:1401px;top:1161px;font-size:14.67px;color:#000">RNA</div>
<div class="t" style="left:1520px;top:1161px;font-size:14.67px;color:#000">40.00</div>
<div class="a" style="left:464px;top:1177px;width:1127px;height:21px;background:#0078d7;border-top:1px solid #a0a0a0"></div>
<div class="a" style="left:504px;top:1177px;width:1px;height:21px;background:#a0a0a0"></div>
<div class="a" style="left:615px;top:1177px;width:1px;height:21px;background:#a0a0a0"></div>
<div class="a" style="left:720px;top:1177px;width:1px;height:21px;background:#a0a0a0"></div>
<div class="a" style="left:848px;top:1177px;width:1px;height:21px;background:#a0a0a0"></div>
<div class="a" style="left:960px;top:1177px;width:1px;height:21px;background:#a0a0a0"></div>
<div class="a" style="left:1018px;top:1177px;width:1px;height:21px;background:#a0a0a0"></div>
<div class="a" style="left:1123px;top:1177px;width:1px;height:21px;background:#a0a0a0"></div>
<div class="a" style="left:1228px;top:1177px;width:1px;height:21px;background:#a0a0a0"></div>
<div class="a" style="left:1313px;top:1177px;width:1px;height:21px;background:#a0a0a0"></div>
<div class="a" style="left:1398px;top:1177px;width:1px;height:21px;background:#a0a0a0"></div>
<div class="a" style="left:1517px;top:1177px;width:1px;height:21px;background:#a0a0a0"></div>
<div class="a" style="left:1591px;top:1177px;width:1px;height:21px;background:#a0a0a0"></div>
<div class="t" style="left:467px;top:1182px;font-size:14.67px;color:#fff">10</div>
<div class="t" style="left:507px;top:1182px;font-size:14.67px;color:#fff">B11</div>
<div class="t" style="left:618px;top:1182px;font-size:14.67px;color:#fff">TP-SSV</div>
<div class="t" style="left:723px;top:1182px;font-size:14.67px;color:#fff">04.10.2024 11:32</div>
<div class="t" style="left:851px;top:1182px;font-size:14.67px;color:#fff">205.3</div>
<div class="t" style="left:963px;top:1182px;font-size:14.67px;color:#fff">ng/µl</div>
<div class="t" style="left:1021px;top:1182px;font-size:14.67px;color:#fff">5.131</div>
<div class="t" style="left:1126px;top:1182px;font-size:14.67px;color:#fff">2.432</div>
<div class="t" style="left:1231px;top:1182px;font-size:14.67px;color:#fff">2.11</div>
<div class="t" style="left:1316px;top:1182px;font-size:14.67px;color:#fff">1.82</div>
<div class="t" style="left:1401px;top:1182px;font-size:14.67px;color:#fff">RNA</div>
<div class="t" style="left:1520px;top:1182px;font-size:14.67px;color:#fff">40.00</div>
<div class="a" style="left:464px;top:1198px;width:1128px;height:1px;background:#a0a0a0"></div>
<div class="a" style="left:1897px;top:986px;width:17px;height:225px;background:#f0f0f0;border-left:1px solid #fbfbfb"></div>
<div class="a" style="left:1905px;top:1011px;width:2px;height:183px;background:#888;border-radius:1px"></div>
<div class="a" style="left:0;top:1218px;width:1918px;height:22px;background:#f0f0f0"></div>
<div class="a" style="left:0;top:1240px;width:1918px;height:1px;background:#b0b0b0"></div>
<svg class="a" style="left:50px;top:1221px" width="16" height="17">
<path d="M8,0.5 L15,3 L15,9 Q14,14 8,16.5 Q2,14 1,9 L1,3 Z" fill="#4a9a5a" stroke="#7a8a80" stroke-width="0.8"/>
<path d="M4.5,8.5 L7,11 L11.5,6" fill="none" stroke="#fff" stroke-width="1.8"/></svg>
<div class="t" style="right:19px;top:1224px;font-size:12.2px;letter-spacing:-0.75px;color:#111">TP-SSV</div>
<div class="a" style="left:0;top:1241px;width:1918px;height:47px;background:linear-gradient(90deg,#e2ebf6 0px,#e8eef8 380px,#dde6f7 430px,#d4e2f8 470px,#d9ddf5 540px,#dcdcf4 620px,#e0e2f6 700px,#dde3f6 760px,#dde2f6 960px,#dcdff4 1200px,#e0e4f5 1350px,#e3ebf7 1500px,#e4ecf8 1918px)"></div>
<svg class="a" style="left:16px;top:1258px" width="26" height="16">
<path d="M1,4 h20 M1,9 h20" stroke="#7f9ab8" stroke-width="2.5"/><circle cx="22" cy="6.5" r="3.5" fill="#7f9ab8"/><circle cx="17" cy="12" r="3" fill="#7f9ab8"/></svg>
<div class="a" style="left:28px;top:1246px;width:16px;height:16px;background:#c42b1c;border-radius:50%"></div>
<div class="t" style="left:33px;top:1249px;font-size:10.5px;color:#fff">1</div>
<div class="t" style="left:48px;top:1251px;font-size:11.5px;color:#111">13°C</div>
<div class="t" style="left:48px;top:1266px;font-size:12.4px;color:#444">Windy</div>
<svg class="a" style="left:725px;top:1253px" width="24" height="24">
<rect x="0" y="0" width="11.3" height="11.3" fill="#1a90e8"/><rect x="12.3" y="0" width="11.3" height="11.3" fill="#2aa0f0"/>
<rect x="0" y="12.3" width="11.3" height="11.3" fill="#0c7ad8"/><rect x="12.3" y="12.3" width="11.3" height="11.3" fill="#1a8ae4"/></svg>
<div class="a" style="left:762px;top:1249px;width:218px;height:31px;background:rgba(255,255,255,0.75);border:1px solid #d6dbe4;border-radius:16px"></div>
<svg class="a" style="left:772px;top:1256px" width="18" height="18"><circle cx="7.5" cy="7.5" r="5.5" fill="none" stroke="#222" stroke-width="1.6"/><path d="M11.5,11.5 L16,16" stroke="#222" stroke-width="1.8"/></svg>
<div class="t" style="left:798px;top:1257px;font-size:13.5px;color:#5a5a5a">Search</div>
<svg class="a" style="left:920px;top:1244px" width="100" height="40" viewBox="0 0 1920 768">
<defs>
<radialGradient id="sblob" cx="55%" cy="70%" r="60%"><stop offset="0" stop-color="#1a2a8a"/><stop offset="0.6" stop-color="#3a5ab0"/><stop offset="1" stop-color="#ffffff" stop-opacity="0"/></radialGradient>
<radialGradient id="splan" cx="75%" cy="25%" r="80%"><stop offset="0" stop-color="#f06a50"/><stop offset="0.45" stop-color="#c0208a"/><stop offset="1" stop-color="#8a1050"/></radialGradient>
<linearGradient id="rock" x1="0" y1="0" x2="1" y2="1"><stop offset="0" stop-color="#e8e8ee"/><stop offset="1" stop-color="#8a8a98"/></linearGradient>
<linearGradient id="tvg" x1="0" y1="0" x2="1" y2="1"><stop offset="0" stop-color="#e6e6e6"/><stop offset="1" stop-color="#a8a8a8"/></linearGradient>
</defs>
<ellipse cx="640" cy="460" rx="470" ry="200" fill="url(#sblob)"/>
<circle cx="270" cy="510" r="55" fill="#3a6a8a" opacity="0.8"/>
<path d="M540,130 Q800,110 1000,200 Q1110,280 1090,370 Q1040,470 860,460 Q640,440 560,300 Q520,200 540,130 Z" fill="url(#splan)"/>
<path d="M230,200 Q260,180 300,230 L560,430 L500,500 L250,260 Q220,230 230,200 Z" fill="url(#rock)"/>
<path d="M540,450 L640,530 L570,470 Z" fill="#cfe6ff"/>
<circle cx="355" cy="490" r="10" fill="#fff"/><circle cx="515" cy="545" r="10" fill="#fff"/><circle cx="835" cy="530" r="12" fill="#fff"/>
<rect x="1515" y="170" width="330" height="295" fill="#f8f8f8"/>
<rect x="1400" y="285" width="345" height="305" rx="18" fill="#1e1e1e"/>
<rect x="1515" y="285" width="230" height="190" fill="url(#tvg)"/>
</svg>
<svg class="a" style="left:1070px;top:1242px" width="130" height="46" viewBox="0 0 1920 679">
<defs>
<linearGradient id="edg1" x1="0" y1="0" x2="1" y2="0.3"><stop offset="0" stop-color="#1c8ad8"/><stop offset="0.55" stop-color="#28b0e0"/><stop offset="1" stop-color="#5ee06a"/></linearGradient>
<linearGradient id="edg2" x1="0" y1="0" x2="1" y2="1"><stop offset="0" stop-color="#1a6ed0"/><stop offset="1" stop-color="#0c4a9a"/></linearGradient>
<linearGradient id="appg" x1="0" y1="0" x2="1" y2="1"><stop offset="0" stop-color="#d8dcf0"/><stop offset="0.5" stop-color="#6a78c0"/><stop offset="1" stop-color="#4a58a8"/></linearGradient>
</defs>
<path d="M170,320 Q180,150 350,145 Q520,150 525,300 Q520,390 430,395 L300,395 Q250,330 330,300 Q400,290 390,360 Z" fill="url(#edg1)"/>
<path d="M170,320 Q180,480 340,500 Q440,505 490,420 Q420,470 340,440 Q240,400 260,300 Q280,230 380,240 Q260,170 190,250 Q165,285 170,320 Z" fill="url(#edg2)"/>
<circle cx="335" cy="335" r="45" fill="#eef4fb"/>
<rect x="710" y="45" width="560" height="560" rx="40" fill="#ffffff" opacity="0.55"/>
<rect x="815" y="150" width="350" height="350" fill="url(#appg)"/>
<rect x="840" y="165" width="295" height="80" rx="40" fill="#050505"/>
<rect x="830" y="385" width="310" height="85" rx="40" fill="#050505"/>
<path d="M890,245 L1080,245 Q1010,300 1010,320 Q1010,340 1080,385 L890,385 Q960,340 960,320 Q960,300 890,245 Z" fill="#3a4aa8"/>
<ellipse cx="972" cy="320" rx="30" ry="14" fill="#d8dcff"/>
<rect x="875" y="562" width="230" height="38" rx="19" fill="#0a6ed1"/>
<path d="M1640,165 Q1800,170 1800,320 Q1795,380 1740,380 Q1690,380 1700,430 Q1700,500 1620,495 Q1480,480 1475,330 Q1480,170 1640,165 Z" fill="#2aaef0"/>
<circle cx="1525" cy="330" r="30" fill="#e0582a"/><circle cx="1572" cy="250" r="30" fill="#2aa83a"/><circle cx="1642" cy="222" r="28" fill="#f4d020"/>
<path d="M1625,345 h40 M1645,325 v40" stroke="#ffffff" stroke-width="14"/>
<rect x="1712" y="300" width="45" height="195" fill="#a8702a"/><rect x="1705" y="268" width="60" height="40" fill="#f0e0b8"/>
<rect x="1595" y="565" width="90" height="35" rx="17" fill="#6a6e78"/>
</svg>
<svg class="a" style="left:1687px;top:1260px" width="12" height="8"><path d="M1,7 L6,2 L11,7" fill="none" stroke="#222" stroke-width="1.2"/></svg>
<div class="t" style="left:1721px;top:1260px;font-size:11px;color:#222">FRA</div>
<svg class="a" style="left:1760px;top:1255px" width="18" height="18">
<rect x="0.6" y="1" width="12" height="10" fill="none" stroke="#222" stroke-width="1.1"/><path d="M4,14.5 h7 M7,11 v3.5" stroke="#222" stroke-width="1.1"/>
<rect x="12" y="0.6" width="3" height="5" rx="1.5" fill="none" stroke="#222" stroke-width="1"/><path d="M13.5,5.6 V15" stroke="#222" stroke-width="1.1"/></svg>
<svg class="a" style="left:1784px;top:1256px" width="18" height="16">
<path d="M1,5.5 h3 L8,2 V14 L4,10.5 H1 Z" fill="none" stroke="#222" stroke-width="1.1"/>
<path d="M10.5,5.5 Q12,8 10.5,10.5 M12.5,3.5 Q15.5,8 12.5,12.5 M14.5,1.5 Q18.5,8 14.5,14.5" fill="none" stroke="#222" stroke-width="1.1"/></svg>
<div class="t" style="right:45px;top:1251px;font-size:11.5px;color:#222">11:32</div>
<div class="t" style="right:45px;top:1267px;font-size:11.5px;color:#222">04.10.2024</div>
<svg class="a" style="left:1883px;top:1257px" width="15" height="16">
<path d="M7.5,1 Q12.5,1 12.5,7 L12.5,10.5 L14.5,12.5 L0.5,12.5 L2.5,10.5 L2.5,7 Q2.5,1 7.5,1 Z" fill="#0b3d91"/><ellipse cx="7.5" cy="14" rx="2.5" ry="1.6" fill="#0b3d91"/></svg>
</body></html>
